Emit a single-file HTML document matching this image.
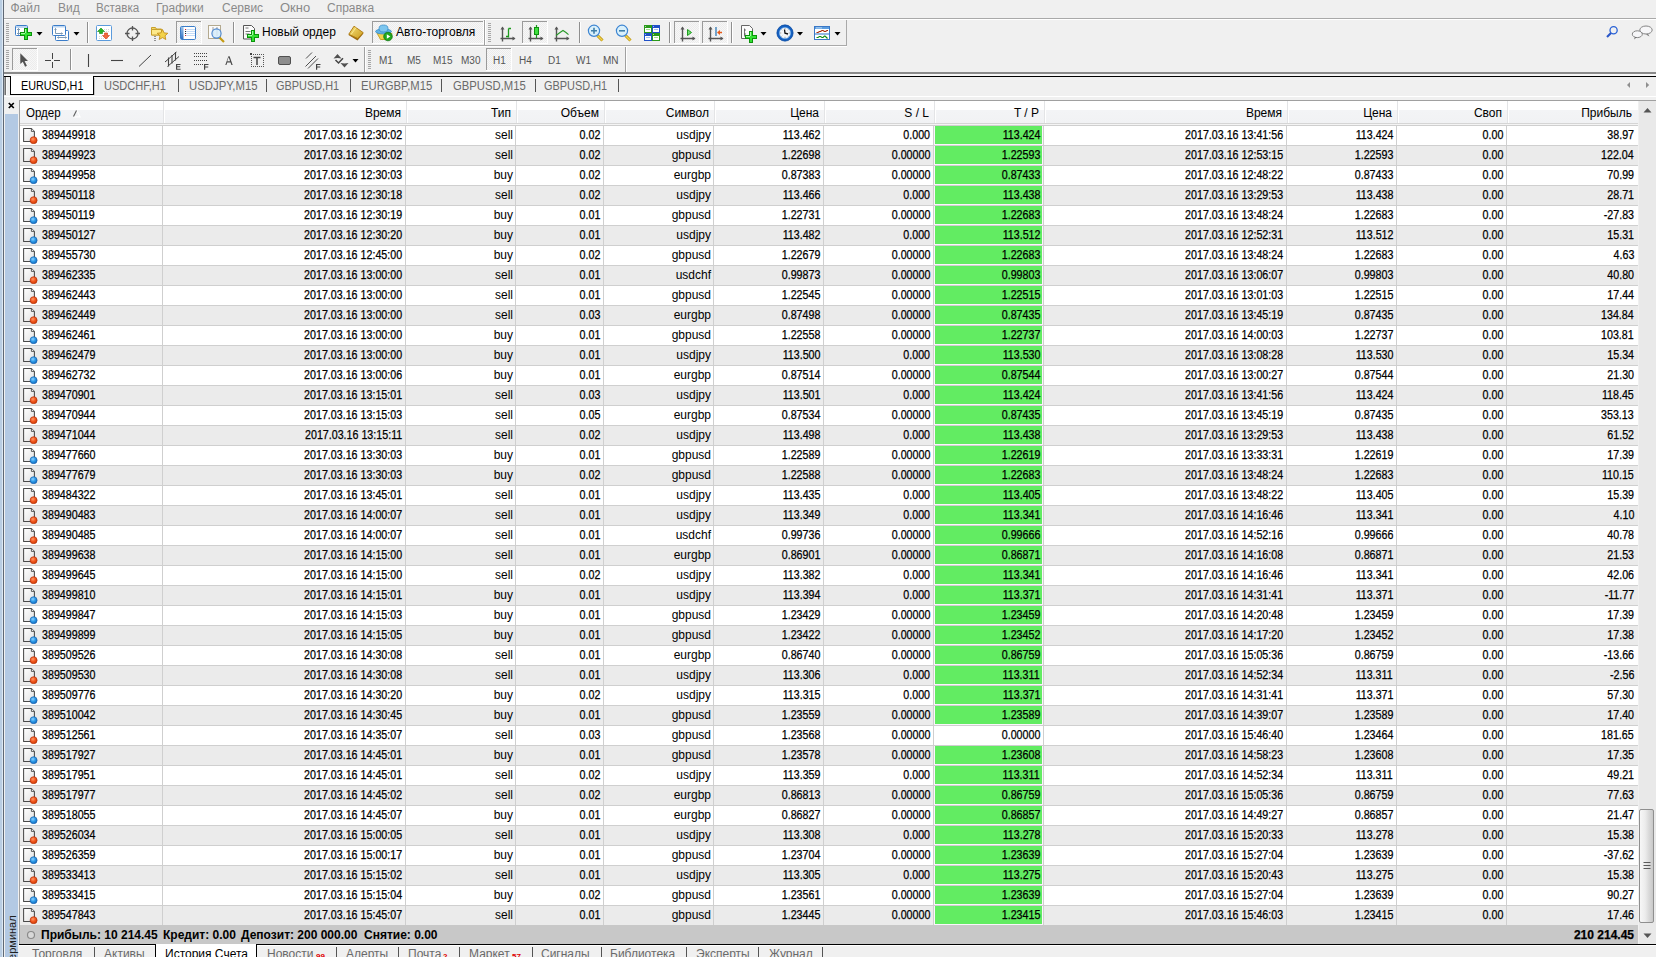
<!DOCTYPE html><html><head><meta charset="utf-8"><title>MT4</title><style>
*{box-sizing:border-box}
html,body{margin:0;padding:0}
body{width:1656px;height:957px;overflow:hidden;position:relative;background:#f0f0f0;font-family:"Liberation Sans",sans-serif;font-size:12px;color:#000}
.a{position:absolute}
.t{position:absolute;white-space:nowrap;line-height:14px}
.r{transform-origin:100% 50%}
.l{transform-origin:0 50%}
.menu{color:#8a8a8a;font-size:12px}
.cell{position:absolute;white-space:nowrap;line-height:14px;text-align:right;-webkit-text-stroke:0.25px #000}
</style></head><body>
<div class="a" style="left:0;top:0;width:2px;height:957px;background:#b9cde2"></div>
<div class="a" style="left:2px;top:0;width:1px;height:957px;background:#dce8f4"></div>
<div class="a" style="left:3px;top:0;width:1px;height:957px;background:#5f6874"></div>
<svg class="a" style="left:0;top:0" width="1656" height="96"><defs><pattern id="dots" width="2" height="2" patternUnits="userSpaceOnUse"><rect width="2" height="2" fill="#f7f7f7"/><rect width="1" height="1" fill="#ececec"/><rect x="1" y="1" width="1" height="1" fill="#ececec"/></pattern><linearGradient id="gold" x1="0" y1="0" x2="1" y2="1"><stop offset="0" stop-color="#f7e27a"/><stop offset="1" stop-color="#c99a1c"/></linearGradient><linearGradient id="bluebar" x1="0" y1="0" x2="0" y2="1"><stop offset="0" stop-color="#9cc3ea"/><stop offset="1" stop-color="#2f6fc0"/></linearGradient></defs><rect x="6" y="23" width="3" height="1" fill="#a6a6a6"/><rect x="6" y="25" width="3" height="1" fill="#a6a6a6"/><rect x="6" y="27" width="3" height="1" fill="#a6a6a6"/><rect x="6" y="29" width="3" height="1" fill="#a6a6a6"/><rect x="6" y="31" width="3" height="1" fill="#a6a6a6"/><rect x="6" y="33" width="3" height="1" fill="#a6a6a6"/><rect x="6" y="35" width="3" height="1" fill="#a6a6a6"/><rect x="6" y="37" width="3" height="1" fill="#a6a6a6"/><rect x="6" y="39" width="3" height="1" fill="#a6a6a6"/><rect x="6" y="41" width="3" height="1" fill="#a6a6a6"/><rect x="15.5" y="25.5" width="12" height="10" rx="1" fill="#fff" stroke="#3b7dc9"/><rect x="16" y="26" width="11" height="2" fill="#bcd6f2"/><path d="M18.5 28.5v6M17 30l1.5-1.5 1.5 1.5M17 33l1.5 1.5 1.5-1.5" stroke="#7d9ab5" fill="none"/><path d="M24 28h4v4h4v4h-4v4h-4v-4h-4v-4h4z" fill="#0b930b"/><path d="M25 29h2v4h4v2h-4v4h-2v-4h-4v-2h4z" fill="#33e133"/><path d="M25 29h1v4h-1z M21 33h4v1h-4z" fill="#a6f7a6"/><path d="M36.5 32h6l-3 3.5z" fill="#000"/><rect x="55.5" y="30.5" width="13" height="10" rx="1" fill="#fff" stroke="#3b7dc9"/><path d="M57.5 37.5h9M58.5 36.5l-1 1 1 1M65.5 36.5l1 1-1 1" stroke="#7d9ab5" fill="none"/><rect x="52.5" y="25.5" width="13" height="10" rx="1" fill="#fff" stroke="#3b7dc9"/><rect x="53" y="26" width="12" height="1.5" fill="#bcd6f2"/><path d="M55.5 28.5v5M54.5 29.5l1-1 1 1M55.5 33.5h7M61.5 32.5l1 1-1 1" stroke="#7d9ab5" fill="none"/><path d="M73.5 32h6l-3 3.5z" fill="#000"/><rect x="87" y="22" width="1" height="21" fill="#8f8f8f"/><rect x="88" y="22" width="1" height="21" fill="#fff"/><rect x="96.5" y="25.5" width="15" height="15" rx="1" fill="#fff" stroke="#5b9bdc"/><path d="M99 36.5h10M99 38.5h10M104 29.5h5M104 31.5h5" stroke="#d8d8d8" stroke-dasharray="1 1"/><path d="M101 28l-3.5 3.5h2v2h3v-2h2z" fill="#26b626" stroke="#118a11" stroke-width="0.6"/><path d="M106 39l3.5-3.5h-2v-2.5h-3v2.5h-2z" fill="#f06a3c" stroke="#d03a10" stroke-width="0.6"/><circle cx="132.5" cy="33.5" r="5.5" fill="none" stroke="#555" stroke-width="1.3"/><path d="M132.5 26v4.5M132.5 36.5V41M125 33.5h4.5M135.5 33.5H140" stroke="#555" stroke-width="1.3"/><path d="M151.5 27.5h4l1 1.5h5v6h-10z" fill="url(#gold)" stroke="#c8a02a"/><path d="M151.5 29.5h10v5.5h-10z" fill="#fde98a" stroke="#c8a02a"/><path d="M155 36v1M155 38v1M155 40v1" stroke="#333"/><path d="M162.5 29.5l1.6 3.4 3.7.4-2.8 2.5.8 3.7-3.3-1.9-3.3 1.9.8-3.7-2.8-2.5 3.7-.4z" fill="#f3d34a" stroke="#c4901a" stroke-width="0.9"/><rect x="176" y="21" width="25" height="22" fill="url(#dots)"/><rect x="176" y="21" width="25" height="1" fill="#9a9a9a"/><rect x="176" y="21" width="1" height="22" fill="#9a9a9a"/><rect x="201" y="21" width="1" height="23" fill="#fff"/><rect x="176" y="43" width="26" height="1" fill="#fff"/><rect x="180.5" y="26.5" width="15" height="13" rx="1.2" fill="#fff" stroke="#3b7dc9"/><rect x="181" y="27" width="2.5" height="12" fill="url(#bluebar)"/><path d="M185 29.5h10M185 31.5h10M185 33.5h10M185 35.5h10" stroke="#c6dcf6"/><path d="M185 29.5h1M185 35.5h1" stroke="#e02020"/><path d="M185 31.5h1M185 33.5h1" stroke="#222"/><rect x="208.5" y="25.5" width="12" height="13" fill="#fbfbfb" stroke="#b3a98f"/><path d="M213 27v9M217 27v9" stroke="#8a8a8a" stroke-width="0.8"/><path d="M219.5 37.5l4.5 4.5" stroke="#c49a12" stroke-width="2.2"/><circle cx="216.5" cy="33.5" r="4.6" fill="#d6ecfa" fill-opacity="0.85" stroke="#4a86cf" stroke-width="1.1"/><rect x="233" y="22" width="1" height="21" fill="#8f8f8f"/><rect x="234" y="22" width="1" height="21" fill="#fff"/><path d="M243.5 25.5h8l3 3v10.5h-11z" fill="#fbfbfb" stroke="#555"/><path d="M245.5 28h3M245.5 31.5h5M245.5 34h4" stroke="#777"/><path d="M251 30h4v4h4v4h-4v4h-4v-4h-4v-4h4z" fill="#0b930b"/><path d="M252 31h2v4h4v2h-4v4h-2v-4h-4v-2h4z" fill="#33e133"/><path d="M252 31h1v4h-1z M248 35h4v1h-4z" fill="#a6f7a6"/><path d="M348.5 35L354 26.5L363.5 33.5L357.5 40.5Z" fill="#9a6a10"/><path d="M348.8 34.2L354 26.2L363.2 32.6L357.8 38.6Z" fill="url(#gold)" stroke="#b07a12" stroke-width="0.9"/><path d="M351 34.5l5-7" stroke="#fff2a0" stroke-width="1" opacity="0.8"/><rect x="372" y="21" width="111" height="22" fill="url(#dots)"/><rect x="372" y="21" width="111" height="1" fill="#9a9a9a"/><rect x="372" y="21" width="1" height="22" fill="#9a9a9a"/><rect x="483" y="21" width="1" height="23" fill="#fff"/><rect x="372" y="43" width="112" height="1" fill="#fff"/><path d="M377 33l3.5 6.5h9l2.5-6z" fill="#f2d34c" stroke="#c8a22a"/><ellipse cx="383.5" cy="31.5" rx="8" ry="2.5" fill="#5fb2e6" stroke="#3a8ec9" stroke-width="0.8"/><ellipse cx="383.5" cy="28.5" rx="4.5" ry="3.5" fill="#7cc6ef" stroke="#3a8ec9" stroke-width="0.8"/><circle cx="388" cy="36.5" r="4.3" fill="#1fa81f" stroke="#117511" stroke-width="0.8"/><path d="M386.8 34.2v4.6l3.5-2.3z" fill="#fff"/><rect x="484" y="20" width="1" height="25" fill="#a0a0a0"/><rect x="485" y="20" width="1" height="25" fill="#fff"/><rect x="488" y="23" width="3" height="1" fill="#a6a6a6"/><rect x="488" y="25" width="3" height="1" fill="#a6a6a6"/><rect x="488" y="27" width="3" height="1" fill="#a6a6a6"/><rect x="488" y="29" width="3" height="1" fill="#a6a6a6"/><rect x="488" y="31" width="3" height="1" fill="#a6a6a6"/><rect x="488" y="33" width="3" height="1" fill="#a6a6a6"/><rect x="488" y="35" width="3" height="1" fill="#a6a6a6"/><rect x="488" y="37" width="3" height="1" fill="#a6a6a6"/><rect x="488" y="39" width="3" height="1" fill="#a6a6a6"/><rect x="488" y="41" width="3" height="1" fill="#a6a6a6"/><path d="M502.5 41.5V27.5M500.5 38.5H514.5" stroke="#555" stroke-width="1.4" fill="none"/><path d="M500.5 29.5l2-3 2 3z M512.5 36.5l3 2-3 2z" fill="#555"/><path d="M508.5 28.5v9M508.5 28.5h2.5M506 36.5h2.5" stroke="#1e9a1e" stroke-width="1.3" fill="none"/><rect x="522" y="21" width="25" height="22" fill="url(#dots)"/><rect x="522" y="21" width="25" height="1" fill="#9a9a9a"/><rect x="522" y="21" width="1" height="22" fill="#9a9a9a"/><rect x="547" y="21" width="1" height="23" fill="#fff"/><rect x="522" y="43" width="26" height="1" fill="#fff"/><path d="M530.5 41.5V27.5M528.5 38.5H542.5" stroke="#555" stroke-width="1.4" fill="none"/><path d="M528.5 29.5l2-3 2 3z M540.5 36.5l3 2-3 2z" fill="#555"/><path d="M536.5 25v13" stroke="#1e9a1e" stroke-width="1.2"/><rect x="534.5" y="27.5" width="4" height="7" fill="#3fe03f" stroke="#119011"/><path d="M556.5 41.5V27.5M554.5 38.5H568.5" stroke="#555" stroke-width="1.4" fill="none"/><path d="M554.5 29.5l2-3 2 3z M566.5 36.5l3 2-3 2z" fill="#555"/><path d="M556 35.5l4-3 3-2 3 2 2.5 2.2" stroke="#2a9a2a" stroke-width="1.1" fill="none"/><rect x="579" y="22" width="1" height="21" fill="#8f8f8f"/><rect x="580" y="22" width="1" height="21" fill="#fff"/><path d="M597.5 35.5l5 5" stroke="#b8900a" stroke-width="3"/><path d="M597.5 35.5l5 5" stroke="#f2d24a" stroke-width="1.5"/><circle cx="594" cy="30.8" r="5.6" fill="#d9f0fb" stroke="#3d85d2" stroke-width="1.2"/><path d="M591 30.8h6M594 27.8v6" stroke="#3f7fa8" stroke-width="1.6"/><path d="M625.5 35.5l5 5" stroke="#b8900a" stroke-width="3"/><path d="M625.5 35.5l5 5" stroke="#f2d24a" stroke-width="1.5"/><circle cx="622" cy="30.8" r="5.6" fill="#d9f0fb" stroke="#3d85d2" stroke-width="1.2"/><path d="M619 30.8h6" stroke="#3f7fa8" stroke-width="1.6"/><rect x="644" y="25" width="8" height="8" fill="#2a9a1a"/><rect x="645" y="28" width="6" height="4" fill="#fff"/><rect x="646" y="29" width="4" height="1" fill="#9ee08e"/><rect x="645" y="26" width="1" height="1" fill="#fff" opacity="0.6"/><rect x="652" y="25" width="8" height="8" fill="#2050c8"/><rect x="653" y="28" width="6" height="4" fill="#fff"/><rect x="654" y="29" width="4" height="1" fill="#a8c0f0"/><rect x="653" y="26" width="1" height="1" fill="#fff" opacity="0.6"/><rect x="644" y="33" width="8" height="8" fill="#2050c8"/><rect x="645" y="36" width="6" height="4" fill="#fff"/><rect x="646" y="37" width="4" height="1" fill="#a8c0f0"/><rect x="645" y="34" width="1" height="1" fill="#fff" opacity="0.6"/><rect x="652" y="33" width="8" height="8" fill="#2a9a1a"/><rect x="653" y="36" width="6" height="4" fill="#fff"/><rect x="654" y="37" width="4" height="1" fill="#9ee08e"/><rect x="653" y="34" width="1" height="1" fill="#fff" opacity="0.6"/><rect x="669" y="22" width="1" height="21" fill="#8f8f8f"/><rect x="670" y="22" width="1" height="21" fill="#fff"/><rect x="674" y="21" width="25" height="22" fill="url(#dots)"/><rect x="674" y="21" width="25" height="1" fill="#9a9a9a"/><rect x="674" y="21" width="1" height="22" fill="#9a9a9a"/><rect x="699" y="21" width="1" height="23" fill="#fff"/><rect x="674" y="43" width="26" height="1" fill="#fff"/><path d="M682.5 41.5V27.5M680.5 38.5H694.5" stroke="#555" stroke-width="1.4" fill="none"/><path d="M680.5 29.5l2-3 2 3z M692.5 36.5l3 2-3 2z" fill="#555"/><path d="M687.5 29.5v6l4-3z" fill="#6fe06f" stroke="#1e9a1e"/><rect x="702" y="21" width="25" height="22" fill="url(#dots)"/><rect x="702" y="21" width="25" height="1" fill="#9a9a9a"/><rect x="702" y="21" width="1" height="22" fill="#9a9a9a"/><rect x="727" y="21" width="1" height="23" fill="#fff"/><rect x="702" y="43" width="26" height="1" fill="#fff"/><path d="M710.5 41.5V27.5M708.5 38.5H722.5" stroke="#555" stroke-width="1.4" fill="none"/><path d="M708.5 29.5l2-3 2 3z M720.5 36.5l3 2-3 2z" fill="#555"/><path d="M716 27v9" stroke="#1f6fb0" stroke-width="1.2"/><path d="M717 32.5l3-2.5v1.8h2v1.4h-2v1.8z" fill="#e85a18"/><rect x="731" y="22" width="1" height="21" fill="#8f8f8f"/><rect x="732" y="22" width="1" height="21" fill="#fff"/><path d="M741.5 25.5h8l3 3v10h-11z" fill="#fbfbfb" stroke="#666"/><path d="M744.5 28.5v8M744 30h2M744 34h2" stroke="#555" stroke-width="0.8"/><path d="M749 31h4v4h4v4h-4v4h-4v-4h-4v-4h4z" fill="#0b930b"/><path d="M750 32h2v4h4v2h-4v4h-2v-4h-4v-2h4z" fill="#33e133"/><path d="M750 32h1v4h-1z M746 36h4v1h-4z" fill="#a6f7a6"/><path d="M760.5 32h6l-3 3.5z" fill="#000"/><circle cx="785" cy="33" r="6.9" fill="#f4f6f8" stroke="#1560c0" stroke-width="2.6"/><circle cx="785" cy="33" r="8.1" fill="none" stroke="#0a4aa0" stroke-width="0.7"/><circle cx="785" cy="33" r="5.6" fill="none" stroke="#6fb0f0" stroke-width="0.6"/><path d="M785 28.2v1M789.8 33h-1M785 37.8v-1M780.2 33h1M788.4 29.6l-.6.6M781.6 29.6l.6.6M788.4 36.4l-.6-.6M781.6 36.4l.6-.6" stroke="#777" stroke-width="0.8"/><path d="M784.5 29.5L785 33.2L788 34" stroke="#111" stroke-width="1.3" fill="none"/><path d="M797 32h6l-3 3.5z" fill="#000"/><rect x="814.5" y="26.5" width="15" height="13" fill="#fff" stroke="#3a78c6"/><rect x="815" y="27" width="14" height="2" fill="#5d9ee0"/><rect x="816" y="27.5" width="6" height="0.8" fill="#cfe3f7"/><path d="M815 34h14" stroke="#4a88d0" stroke-width="1.2"/><path d="M816.5 32.5h1.5l1.5-1h1l1.5-1h1l1.5 1h1l1.5-1h1" stroke="#a82a08" stroke-width="1.1" fill="none"/><path d="M816.5 37.5h1.5l1.5-1h1l1.5 1h1l1.5-1.5h.5l1.5 1.5 1 1" stroke="#0e8a0e" stroke-width="1.1" fill="none"/><path d="M834.5 32h6l-3 3.5z" fill="#000"/><circle cx="1613.6" cy="30.2" r="3.6" fill="none" stroke="#2a62d6" stroke-width="1.3"/><path d="M1611 33l-4 4" stroke="#2a56c8" stroke-width="2.2"/><ellipse cx="1646" cy="30" rx="6.2" ry="4" fill="#f6f6f8" stroke="#777" stroke-width="0.9"/><path d="M1648 34l1.5 2.5-3.5-2" fill="#777"/><ellipse cx="1637.3" cy="34.2" rx="5" ry="3.4" fill="#f6f6f8" stroke="#777" stroke-width="0.9"/><path d="M1635 37l-1 2.5 2.5-2" fill="#666"/><rect x="6" y="50" width="3" height="1" fill="#a6a6a6"/><rect x="6" y="52" width="3" height="1" fill="#a6a6a6"/><rect x="6" y="54" width="3" height="1" fill="#a6a6a6"/><rect x="6" y="56" width="3" height="1" fill="#a6a6a6"/><rect x="6" y="58" width="3" height="1" fill="#a6a6a6"/><rect x="6" y="60" width="3" height="1" fill="#a6a6a6"/><rect x="6" y="62" width="3" height="1" fill="#a6a6a6"/><rect x="6" y="64" width="3" height="1" fill="#a6a6a6"/><rect x="6" y="66" width="3" height="1" fill="#a6a6a6"/><rect x="6" y="68" width="3" height="1" fill="#a6a6a6"/><rect x="12" y="48" width="25" height="22" fill="url(#dots)"/><rect x="12" y="48" width="25" height="1" fill="#9a9a9a"/><rect x="12" y="48" width="1" height="22" fill="#9a9a9a"/><rect x="37" y="48" width="1" height="23" fill="#fff"/><rect x="12" y="70" width="26" height="1" fill="#fff"/><path d="M20.3 53.2v10.8l2.5-2.3 2.3 5 1.8-.9-2.3-4.7h3.4z" fill="#505050"/><path d="M52.5 53v6M52.5 62v6M45 60.5h6M54 60.5h6" stroke="#444" stroke-width="1"/><rect x="70" y="49" width="1" height="21" fill="#8f8f8f"/><rect x="71" y="49" width="1" height="21" fill="#fff"/><path d="M88.5 54v13" stroke="#444" stroke-width="1.1"/><path d="M111 60.5h12" stroke="#444" stroke-width="1.1"/><path d="M139 66.5l12-11.5" stroke="#444" stroke-width="1"/><path d="M165 62l11.5-10M167.5 66.5l11.5-10" stroke="#444" stroke-width="1" fill="none"/><path d="M168.5 57.5v9M172 55v8.5M175.5 52v8.5" stroke="#444" stroke-width="1.1" fill="none"/><path d="M176 64h4.5v1h-3.3v1.3h3v1h-3v1.4h3.4v1h-4.6z" fill="#444"/><path d="M194 53.5h13" stroke="#444" stroke-dasharray="1 1"/><path d="M194 56.5h13" stroke="#444" stroke-dasharray="1 1"/><path d="M194 60.5h13" stroke="#444" stroke-dasharray="1 1"/><path d="M194 64.5h9" stroke="#444" stroke-dasharray="1 1"/><path d="M204 64h4.5v1h-3.3v1.5h3v1h-3v2.2h-1.2z" fill="#444"/><path d="M225.3 65L228.4 56.2h1.2L232.7 65h-1.3l-.9-2.6h-3.2l-.9 2.6zM227.2 61.3h2.9l-1.45-4.1z" fill="#4a4a4a" fill-rule="evenodd"/><rect x="251" y="54" width="1" height="1" fill="#555"/><rect x="251" y="66" width="1" height="1" fill="#555"/><rect x="253" y="54" width="1" height="1" fill="#555"/><rect x="253" y="66" width="1" height="1" fill="#555"/><rect x="255" y="54" width="1" height="1" fill="#555"/><rect x="255" y="66" width="1" height="1" fill="#555"/><rect x="257" y="54" width="1" height="1" fill="#555"/><rect x="257" y="66" width="1" height="1" fill="#555"/><rect x="259" y="54" width="1" height="1" fill="#555"/><rect x="259" y="66" width="1" height="1" fill="#555"/><rect x="261" y="54" width="1" height="1" fill="#555"/><rect x="261" y="66" width="1" height="1" fill="#555"/><rect x="263" y="54" width="1" height="1" fill="#555"/><rect x="263" y="66" width="1" height="1" fill="#555"/><rect x="251" y="56" width="1" height="1" fill="#555"/><rect x="263" y="56" width="1" height="1" fill="#555"/><rect x="251" y="58" width="1" height="1" fill="#555"/><rect x="263" y="58" width="1" height="1" fill="#555"/><rect x="251" y="60" width="1" height="1" fill="#555"/><rect x="263" y="60" width="1" height="1" fill="#555"/><rect x="251" y="62" width="1" height="1" fill="#555"/><rect x="263" y="62" width="1" height="1" fill="#555"/><rect x="251" y="64" width="1" height="1" fill="#555"/><rect x="263" y="64" width="1" height="1" fill="#555"/><rect x="250" y="53" width="2" height="2" fill="#444"/><path d="M253.5 57.5h7M257 57.5v7.5" stroke="#444" stroke-width="1.5"/><rect x="278.5" y="56.5" width="12" height="8" rx="1.5" fill="#8d8d8d" stroke="#505050"/><path d="M306 58.5l6-6M305.5 66.5l10.5-10.5M308 68.5l10-10" stroke="#505050" stroke-width="1"/><path d="M316 64h4.5v1h-3.3v1.5h3v1h-3v2.2h-1.2z" fill="#444"/><path d="M333.5 58.5L337.5 54L341.5 58.5L337.5 58Z M340.5 63L344.5 67.5L348.5 63L344.5 63.5Z" fill="#505050"/><path d="M335.5 60l3 3 4.5-4.8" stroke="#444" stroke-width="1.5" fill="none"/><path d="M352.5 59h6l-3 3.5z" fill="#000"/><rect x="364" y="47" width="1" height="25" fill="#a0a0a0"/><rect x="365" y="47" width="1" height="25" fill="#fff"/><rect x="368" y="50" width="3" height="1" fill="#a6a6a6"/><rect x="368" y="52" width="3" height="1" fill="#a6a6a6"/><rect x="368" y="54" width="3" height="1" fill="#a6a6a6"/><rect x="368" y="56" width="3" height="1" fill="#a6a6a6"/><rect x="368" y="58" width="3" height="1" fill="#a6a6a6"/><rect x="368" y="60" width="3" height="1" fill="#a6a6a6"/><rect x="368" y="62" width="3" height="1" fill="#a6a6a6"/><rect x="368" y="64" width="3" height="1" fill="#a6a6a6"/><rect x="368" y="66" width="3" height="1" fill="#a6a6a6"/><rect x="368" y="68" width="3" height="1" fill="#a6a6a6"/><rect x="486" y="48" width="25" height="22" fill="url(#dots)"/><rect x="486" y="48" width="25" height="1" fill="#9a9a9a"/><rect x="486" y="48" width="1" height="22" fill="#9a9a9a"/><rect x="511" y="48" width="1" height="23" fill="#fff"/><rect x="486" y="70" width="26" height="1" fill="#fff"/><rect x="625" y="47" width="1" height="25" fill="#a0a0a0"/><rect x="626" y="47" width="1" height="25" fill="#fff"/><path d="M1630 82v6l-3-3z" fill="#8f8f8f"/><path d="M1646 82v6l3.2-3z" fill="#8f8f8f"/></svg>
<div class="t menu l" style="left:10.5px;top:1px;transform:scaleX(1)">Файл</div>
<div class="t menu l" style="left:58px;top:1px;transform:scaleX(1)">Вид</div>
<div class="t menu l" style="left:96px;top:1px;transform:scaleX(0.97)">Вставка</div>
<div class="t menu l" style="left:156px;top:1px;transform:scaleX(1.0)">Графики</div>
<div class="t menu l" style="left:222px;top:1px;transform:scaleX(1.0)">Сервис</div>
<div class="t menu l" style="left:280px;top:1px;transform:scaleX(1.08)">Окно</div>
<div class="t menu l" style="left:327px;top:1px;transform:scaleX(1.0)">Справка</div>
<div class="a" style="left:4px;top:18px;width:1652px;height:1px;background:#a9a9a9"></div>
<div class="a" style="left:4px;top:19px;width:1652px;height:1px;background:#fff"></div>
<div class="a" style="left:4px;top:45px;width:843px;height:1px;background:#a9a9a9"></div>
<div class="a" style="left:4px;top:46px;width:843px;height:1px;background:#fff"></div>
<div class="a" style="left:846px;top:20px;width:1px;height:26px;background:#a9a9a9"></div>
<div class="a" style="left:4px;top:72px;width:1652px;height:2px;background:#8a8a8a"></div>
<div class="a" style="left:4px;top:74px;width:1652px;height:2px;background:#f7f7f7"></div>
<div class="t l" style="left:379px;top:54px;font-size:10px;color:#555;transform:scaleX(1)">M1</div>
<div class="t l" style="left:407px;top:54px;font-size:10px;color:#555;transform:scaleX(1)">M5</div>
<div class="t l" style="left:433px;top:54px;font-size:10px;color:#555;transform:scaleX(1)">M15</div>
<div class="t l" style="left:461px;top:54px;font-size:10px;color:#555;transform:scaleX(1)">M30</div>
<div class="t l" style="left:493px;top:54px;font-size:10px;color:#555;transform:scaleX(1)">H1</div>
<div class="t l" style="left:519px;top:54px;font-size:10px;color:#555;transform:scaleX(1)">H4</div>
<div class="t l" style="left:548px;top:54px;font-size:10px;color:#555;transform:scaleX(1)">D1</div>
<div class="t l" style="left:576px;top:54px;font-size:10px;color:#555;transform:scaleX(1)">W1</div>
<div class="t l" style="left:603px;top:54px;font-size:10px;color:#555;transform:scaleX(1)">MN</div>
<div class="t l" style="left:262px;top:25px;transform:scaleX(1.0)">Новый ордер</div>
<div class="t l" style="left:396px;top:25px">Авто-торговля</div>
<div class="a" style="left:4px;top:76px;width:1652px;height:1px;background:#000"></div>
<div class="a" style="left:4px;top:77px;width:1px;height:18px;background:#a6a6a6"></div>
<div class="a" style="left:5px;top:77px;width:1px;height:18px;background:#707070"></div>
<div class="a" style="left:6px;top:77px;width:1px;height:18px;background:#fafafa"></div>
<div class="a" style="left:10px;top:76px;width:84px;height:19px;background:#fff;border:1px solid #000;border-top:none"></div>
<div class="a" style="left:94px;top:78px;width:1px;height:17px;background:#c4c4c4"></div>
<div class="t l" style="left:20.5px;top:79px;transform:scaleX(0.90)">EURUSD,H1</div>
<div class="t l" style="left:103.5px;top:79px;color:#6a6a6a;transform:scaleX(0.92)">USDCHF,H1</div>
<div class="a" style="left:178px;top:79px;width:1px;height:13px;background:#555"></div>
<div class="t l" style="left:188.5px;top:79px;color:#6a6a6a;transform:scaleX(0.946)">USDJPY,M15</div>
<div class="a" style="left:266px;top:79px;width:1px;height:13px;background:#555"></div>
<div class="t l" style="left:276px;top:79px;color:#6a6a6a;transform:scaleX(0.91)">GBPUSD,H1</div>
<div class="a" style="left:350px;top:79px;width:1px;height:13px;background:#555"></div>
<div class="t l" style="left:360.5px;top:79px;color:#6a6a6a;transform:scaleX(0.94)">EURGBP,M15</div>
<div class="a" style="left:441px;top:79px;width:1px;height:13px;background:#555"></div>
<div class="t l" style="left:452.5px;top:79px;color:#6a6a6a;transform:scaleX(0.94)">GBPUSD,M15</div>
<div class="a" style="left:535px;top:79px;width:1px;height:13px;background:#555"></div>
<div class="t l" style="left:544px;top:79px;color:#6a6a6a;transform:scaleX(0.91)">GBPUSD,H1</div>
<div class="a" style="left:618px;top:79px;width:1px;height:13px;background:#555"></div>
<div class="a" style="left:4px;top:96px;width:1652px;height:1px;background:#fff"></div>
<div class="a" style="left:5px;top:114px;width:13px;height:843px;background:#b3c9e3"></div>
<svg class="a" style="left:7px;top:101px" width="9" height="9"><path d="M1.8 2L6.8 7M6.8 2L1.8 7" stroke="#000" stroke-width="1.7"/></svg>
<div class="t" style="left:5px;top:966px;transform-origin:0 0;transform:rotate(-90deg);font-size:11px;color:#202020">Терминал</div>
<div class="a" style="left:19px;top:100px;width:1637px;height:1px;background:#a0a0a0"></div>
<div class="a" style="left:19px;top:100px;width:1px;height:844px;background:#a0a0a0"></div>
<div class="a" style="left:20px;top:101px;width:1618px;height:22px;background:linear-gradient(#ffffff 0,#ffffff 9px,#f3f4f6 9px,#f1f2f4 22px)"></div>
<div class="a" style="left:20px;top:123px;width:1618px;height:1px;background:#d5d5d5"></div>
<div class="a" style="left:20px;top:124px;width:1618px;height:1px;background:#f4f4f4"></div>
<div class="a" style="left:163px;top:101px;width:1px;height:22px;background:#e3e4e6"></div>
<div class="a" style="left:164px;top:101px;width:1px;height:22px;background:#fff"></div>
<div class="a" style="left:406px;top:101px;width:1px;height:22px;background:#e3e4e6"></div>
<div class="a" style="left:407px;top:101px;width:1px;height:22px;background:#fff"></div>
<div class="a" style="left:516px;top:101px;width:1px;height:22px;background:#e3e4e6"></div>
<div class="a" style="left:517px;top:101px;width:1px;height:22px;background:#fff"></div>
<div class="a" style="left:604px;top:101px;width:1px;height:22px;background:#e3e4e6"></div>
<div class="a" style="left:605px;top:101px;width:1px;height:22px;background:#fff"></div>
<div class="a" style="left:714px;top:101px;width:1px;height:22px;background:#e3e4e6"></div>
<div class="a" style="left:715px;top:101px;width:1px;height:22px;background:#fff"></div>
<div class="a" style="left:824px;top:101px;width:1px;height:22px;background:#e3e4e6"></div>
<div class="a" style="left:825px;top:101px;width:1px;height:22px;background:#fff"></div>
<div class="a" style="left:934px;top:101px;width:1px;height:22px;background:#e3e4e6"></div>
<div class="a" style="left:935px;top:101px;width:1px;height:22px;background:#fff"></div>
<div class="a" style="left:1044px;top:101px;width:1px;height:22px;background:#e3e4e6"></div>
<div class="a" style="left:1045px;top:101px;width:1px;height:22px;background:#fff"></div>
<div class="a" style="left:1287px;top:101px;width:1px;height:22px;background:#e3e4e6"></div>
<div class="a" style="left:1288px;top:101px;width:1px;height:22px;background:#fff"></div>
<div class="a" style="left:1397px;top:101px;width:1px;height:22px;background:#e3e4e6"></div>
<div class="a" style="left:1398px;top:101px;width:1px;height:22px;background:#fff"></div>
<div class="a" style="left:1507px;top:101px;width:1px;height:22px;background:#e3e4e6"></div>
<div class="a" style="left:1508px;top:101px;width:1px;height:22px;background:#fff"></div>
<div class="t l" style="left:26px;top:106px;transform:scaleX(0.96)">Ордер</div>
<svg class="a" style="left:70px;top:108px" width="12" height="12"><path d="M7 2.5L10 8.8H3.6" fill="none" stroke="#fff" stroke-width="1.2"/><path d="M3.5 8.5L6.5 2.5" stroke="#606060" stroke-width="1.1"/></svg>
<div class="cell" style="right:1255px;top:106px;-webkit-text-stroke:0">Время</div>
<div class="cell" style="right:1145px;top:106px;-webkit-text-stroke:0">Тип</div>
<div class="cell" style="right:1057px;top:106px;-webkit-text-stroke:0">Объем</div>
<div class="cell" style="right:947px;top:106px;-webkit-text-stroke:0">Символ</div>
<div class="cell" style="right:837px;top:106px;-webkit-text-stroke:0">Цена</div>
<div class="cell" style="right:727px;top:106px;-webkit-text-stroke:0">S / L</div>
<div class="cell" style="right:617px;top:106px;-webkit-text-stroke:0">T / P</div>
<div class="cell" style="right:374px;top:106px;-webkit-text-stroke:0">Время</div>
<div class="cell" style="right:264px;top:106px;-webkit-text-stroke:0">Цена</div>
<div class="cell" style="right:154px;top:106px;-webkit-text-stroke:0">Своп</div>
<div class="cell" style="right:24px;top:106px;-webkit-text-stroke:0">Прибыль</div>
<svg width="0" height="0" style="position:absolute"><defs><linearGradient id="gdoc" x1="0" y1="0" x2="1" y2="1"><stop offset="0" stop-color="#ffffff"/><stop offset="1" stop-color="#e2e2e2"/></linearGradient><radialGradient id="gs" cx="0.4" cy="0.35" r="0.7"><stop offset="0" stop-color="#ff9a6a"/><stop offset="0.5" stop-color="#f2561c"/><stop offset="1" stop-color="#c83a08"/></radialGradient><radialGradient id="gb" cx="0.4" cy="0.35" r="0.7"><stop offset="0" stop-color="#8fd0ff"/><stop offset="0.5" stop-color="#2a9ae8"/><stop offset="1" stop-color="#1766b8"/></radialGradient></defs></svg>
<div class="a" style="left:20px;top:125px;width:1618px;height:20px;background:#ffffff;border-top:1px solid #cfcfcf"></div>
<div class="a" style="left:20px;top:145px;width:1618px;height:20px;background:#ebebeb;border-top:1px solid #cfcfcf"></div>
<div class="a" style="left:20px;top:165px;width:1618px;height:20px;background:#ffffff;border-top:1px solid #cfcfcf"></div>
<div class="a" style="left:20px;top:185px;width:1618px;height:20px;background:#ebebeb;border-top:1px solid #cfcfcf"></div>
<div class="a" style="left:20px;top:205px;width:1618px;height:20px;background:#ffffff;border-top:1px solid #cfcfcf"></div>
<div class="a" style="left:20px;top:225px;width:1618px;height:20px;background:#ebebeb;border-top:1px solid #cfcfcf"></div>
<div class="a" style="left:20px;top:245px;width:1618px;height:20px;background:#ffffff;border-top:1px solid #cfcfcf"></div>
<div class="a" style="left:20px;top:265px;width:1618px;height:20px;background:#ebebeb;border-top:1px solid #cfcfcf"></div>
<div class="a" style="left:20px;top:285px;width:1618px;height:20px;background:#ffffff;border-top:1px solid #cfcfcf"></div>
<div class="a" style="left:20px;top:305px;width:1618px;height:20px;background:#ebebeb;border-top:1px solid #cfcfcf"></div>
<div class="a" style="left:20px;top:325px;width:1618px;height:20px;background:#ffffff;border-top:1px solid #cfcfcf"></div>
<div class="a" style="left:20px;top:345px;width:1618px;height:20px;background:#ebebeb;border-top:1px solid #cfcfcf"></div>
<div class="a" style="left:20px;top:365px;width:1618px;height:20px;background:#ffffff;border-top:1px solid #cfcfcf"></div>
<div class="a" style="left:20px;top:385px;width:1618px;height:20px;background:#ebebeb;border-top:1px solid #cfcfcf"></div>
<div class="a" style="left:20px;top:405px;width:1618px;height:20px;background:#ffffff;border-top:1px solid #cfcfcf"></div>
<div class="a" style="left:20px;top:425px;width:1618px;height:20px;background:#ebebeb;border-top:1px solid #cfcfcf"></div>
<div class="a" style="left:20px;top:445px;width:1618px;height:20px;background:#ffffff;border-top:1px solid #cfcfcf"></div>
<div class="a" style="left:20px;top:465px;width:1618px;height:20px;background:#ebebeb;border-top:1px solid #cfcfcf"></div>
<div class="a" style="left:20px;top:485px;width:1618px;height:20px;background:#ffffff;border-top:1px solid #cfcfcf"></div>
<div class="a" style="left:20px;top:505px;width:1618px;height:20px;background:#ebebeb;border-top:1px solid #cfcfcf"></div>
<div class="a" style="left:20px;top:525px;width:1618px;height:20px;background:#ffffff;border-top:1px solid #cfcfcf"></div>
<div class="a" style="left:20px;top:545px;width:1618px;height:20px;background:#ebebeb;border-top:1px solid #cfcfcf"></div>
<div class="a" style="left:20px;top:565px;width:1618px;height:20px;background:#ffffff;border-top:1px solid #cfcfcf"></div>
<div class="a" style="left:20px;top:585px;width:1618px;height:20px;background:#ebebeb;border-top:1px solid #cfcfcf"></div>
<div class="a" style="left:20px;top:605px;width:1618px;height:20px;background:#ffffff;border-top:1px solid #cfcfcf"></div>
<div class="a" style="left:20px;top:625px;width:1618px;height:20px;background:#ebebeb;border-top:1px solid #cfcfcf"></div>
<div class="a" style="left:20px;top:645px;width:1618px;height:20px;background:#ffffff;border-top:1px solid #cfcfcf"></div>
<div class="a" style="left:20px;top:665px;width:1618px;height:20px;background:#ebebeb;border-top:1px solid #cfcfcf"></div>
<div class="a" style="left:20px;top:685px;width:1618px;height:20px;background:#ffffff;border-top:1px solid #cfcfcf"></div>
<div class="a" style="left:20px;top:705px;width:1618px;height:20px;background:#ebebeb;border-top:1px solid #cfcfcf"></div>
<div class="a" style="left:20px;top:725px;width:1618px;height:20px;background:#ffffff;border-top:1px solid #cfcfcf"></div>
<div class="a" style="left:20px;top:745px;width:1618px;height:20px;background:#ebebeb;border-top:1px solid #cfcfcf"></div>
<div class="a" style="left:20px;top:765px;width:1618px;height:20px;background:#ffffff;border-top:1px solid #cfcfcf"></div>
<div class="a" style="left:20px;top:785px;width:1618px;height:20px;background:#ebebeb;border-top:1px solid #cfcfcf"></div>
<div class="a" style="left:20px;top:805px;width:1618px;height:20px;background:#ffffff;border-top:1px solid #cfcfcf"></div>
<div class="a" style="left:20px;top:825px;width:1618px;height:20px;background:#ebebeb;border-top:1px solid #cfcfcf"></div>
<div class="a" style="left:20px;top:845px;width:1618px;height:20px;background:#ffffff;border-top:1px solid #cfcfcf"></div>
<div class="a" style="left:20px;top:865px;width:1618px;height:20px;background:#ebebeb;border-top:1px solid #cfcfcf"></div>
<div class="a" style="left:20px;top:885px;width:1618px;height:20px;background:#ffffff;border-top:1px solid #cfcfcf"></div>
<div class="a" style="left:20px;top:905px;width:1618px;height:20px;background:#ebebeb;border-top:1px solid #cfcfcf"></div>
<div class="a" style="left:162px;top:125px;width:1px;height:800px;background:#cfcfcf"></div>
<div class="a" style="left:405px;top:125px;width:1px;height:800px;background:#cfcfcf"></div>
<div class="a" style="left:515px;top:125px;width:1px;height:800px;background:#cfcfcf"></div>
<div class="a" style="left:603px;top:125px;width:1px;height:800px;background:#cfcfcf"></div>
<div class="a" style="left:713px;top:125px;width:1px;height:800px;background:#cfcfcf"></div>
<div class="a" style="left:823px;top:125px;width:1px;height:800px;background:#cfcfcf"></div>
<div class="a" style="left:933px;top:125px;width:1px;height:800px;background:#cfcfcf"></div>
<div class="a" style="left:1043px;top:125px;width:1px;height:800px;background:#cfcfcf"></div>
<div class="a" style="left:1286px;top:125px;width:1px;height:800px;background:#cfcfcf"></div>
<div class="a" style="left:1396px;top:125px;width:1px;height:800px;background:#cfcfcf"></div>
<div class="a" style="left:1506px;top:125px;width:1px;height:800px;background:#cfcfcf"></div>
<div class="a" style="left:934px;top:126px;width:109px;height:19px;background:#fbf6fb"></div>
<div class="a" style="left:935px;top:126px;width:107px;height:18px;background:#62ec62"></div>
<svg class="a" style="left:22px;top:127px" width="17" height="17"><path d="M1.6 1.5H9.2L12.4 4.6V14.4H1.6Z" fill="url(#gdoc)" stroke="#4a4a4a" stroke-width="1.05" stroke-linejoin="round"/><path d="M9.4 1.8V4.4H12.2" fill="#fff" stroke="#4a4a4a" stroke-width="0.9"/><circle cx="11.6" cy="13.2" r="3.5" fill="url(#gs)" stroke="#b83208" stroke-width="0.7"/></svg>
<div class="t l" style="left:42px;top:128px;transform:scaleX(0.89);-webkit-text-stroke:0.25px #000">389449918</div>
<div class="cell r" style="right:1254px;top:128px;transform:scaleX(0.89)">2017.03.16 12:30:02</div>
<div class="cell r" style="right:1143px;top:128px;transform:scaleX(1.0);-webkit-text-stroke:0">sell</div>
<div class="cell r" style="right:1056px;top:128px;transform:scaleX(0.89)">0.02</div>
<div class="cell r" style="right:945px;top:128px;transform:scaleX(1.0);-webkit-text-stroke:0">usdjpy</div>
<div class="cell r" style="right:836px;top:128px;transform:scaleX(0.89)">113.462</div>
<div class="cell r" style="right:726px;top:128px;transform:scaleX(0.89)">0.000</div>
<div class="cell r" style="right:616px;top:128px;transform:scaleX(0.89)">113.424</div>
<div class="cell r" style="right:373px;top:128px;transform:scaleX(0.89)">2017.03.16 13:41:56</div>
<div class="cell r" style="right:263px;top:128px;transform:scaleX(0.89)">113.424</div>
<div class="cell r" style="right:153px;top:128px;transform:scaleX(0.89)">0.00</div>
<div class="cell r" style="right:22px;top:128px;transform:scaleX(0.89)">38.97</div>
<div class="a" style="left:934px;top:146px;width:109px;height:19px;background:#fbf6fb"></div>
<div class="a" style="left:935px;top:146px;width:107px;height:18px;background:#62ec62"></div>
<svg class="a" style="left:22px;top:147px" width="17" height="17"><path d="M1.6 1.5H9.2L12.4 4.6V14.4H1.6Z" fill="url(#gdoc)" stroke="#4a4a4a" stroke-width="1.05" stroke-linejoin="round"/><path d="M9.4 1.8V4.4H12.2" fill="#fff" stroke="#4a4a4a" stroke-width="0.9"/><circle cx="11.6" cy="13.2" r="3.5" fill="url(#gs)" stroke="#b83208" stroke-width="0.7"/></svg>
<div class="t l" style="left:42px;top:148px;transform:scaleX(0.89);-webkit-text-stroke:0.25px #000">389449923</div>
<div class="cell r" style="right:1254px;top:148px;transform:scaleX(0.89)">2017.03.16 12:30:02</div>
<div class="cell r" style="right:1143px;top:148px;transform:scaleX(1.0);-webkit-text-stroke:0">sell</div>
<div class="cell r" style="right:1056px;top:148px;transform:scaleX(0.89)">0.02</div>
<div class="cell r" style="right:945px;top:148px;transform:scaleX(1.0);-webkit-text-stroke:0">gbpusd</div>
<div class="cell r" style="right:836px;top:148px;transform:scaleX(0.89)">1.22698</div>
<div class="cell r" style="right:726px;top:148px;transform:scaleX(0.89)">0.00000</div>
<div class="cell r" style="right:616px;top:148px;transform:scaleX(0.89)">1.22593</div>
<div class="cell r" style="right:373px;top:148px;transform:scaleX(0.89)">2017.03.16 12:53:15</div>
<div class="cell r" style="right:263px;top:148px;transform:scaleX(0.89)">1.22593</div>
<div class="cell r" style="right:153px;top:148px;transform:scaleX(0.89)">0.00</div>
<div class="cell r" style="right:22px;top:148px;transform:scaleX(0.89)">122.04</div>
<div class="a" style="left:934px;top:166px;width:109px;height:19px;background:#fbf6fb"></div>
<div class="a" style="left:935px;top:166px;width:107px;height:18px;background:#62ec62"></div>
<svg class="a" style="left:22px;top:167px" width="17" height="17"><path d="M1.6 1.5H9.2L12.4 4.6V14.4H1.6Z" fill="url(#gdoc)" stroke="#4a4a4a" stroke-width="1.05" stroke-linejoin="round"/><path d="M9.4 1.8V4.4H12.2" fill="#fff" stroke="#4a4a4a" stroke-width="0.9"/><circle cx="11.6" cy="13.2" r="3.5" fill="url(#gb)" stroke="#1a64b0" stroke-width="0.7"/></svg>
<div class="t l" style="left:42px;top:168px;transform:scaleX(0.89);-webkit-text-stroke:0.25px #000">389449958</div>
<div class="cell r" style="right:1254px;top:168px;transform:scaleX(0.89)">2017.03.16 12:30:03</div>
<div class="cell r" style="right:1143px;top:168px;transform:scaleX(1.0);-webkit-text-stroke:0">buy</div>
<div class="cell r" style="right:1056px;top:168px;transform:scaleX(0.89)">0.02</div>
<div class="cell r" style="right:945px;top:168px;transform:scaleX(1.0);-webkit-text-stroke:0">eurgbp</div>
<div class="cell r" style="right:836px;top:168px;transform:scaleX(0.89)">0.87383</div>
<div class="cell r" style="right:726px;top:168px;transform:scaleX(0.89)">0.00000</div>
<div class="cell r" style="right:616px;top:168px;transform:scaleX(0.89)">0.87433</div>
<div class="cell r" style="right:373px;top:168px;transform:scaleX(0.89)">2017.03.16 12:48:22</div>
<div class="cell r" style="right:263px;top:168px;transform:scaleX(0.89)">0.87433</div>
<div class="cell r" style="right:153px;top:168px;transform:scaleX(0.89)">0.00</div>
<div class="cell r" style="right:22px;top:168px;transform:scaleX(0.89)">70.99</div>
<div class="a" style="left:934px;top:186px;width:109px;height:19px;background:#fbf6fb"></div>
<div class="a" style="left:935px;top:186px;width:107px;height:18px;background:#62ec62"></div>
<svg class="a" style="left:22px;top:187px" width="17" height="17"><path d="M1.6 1.5H9.2L12.4 4.6V14.4H1.6Z" fill="url(#gdoc)" stroke="#4a4a4a" stroke-width="1.05" stroke-linejoin="round"/><path d="M9.4 1.8V4.4H12.2" fill="#fff" stroke="#4a4a4a" stroke-width="0.9"/><circle cx="11.6" cy="13.2" r="3.5" fill="url(#gs)" stroke="#b83208" stroke-width="0.7"/></svg>
<div class="t l" style="left:42px;top:188px;transform:scaleX(0.89);-webkit-text-stroke:0.25px #000">389450118</div>
<div class="cell r" style="right:1254px;top:188px;transform:scaleX(0.89)">2017.03.16 12:30:18</div>
<div class="cell r" style="right:1143px;top:188px;transform:scaleX(1.0);-webkit-text-stroke:0">sell</div>
<div class="cell r" style="right:1056px;top:188px;transform:scaleX(0.89)">0.02</div>
<div class="cell r" style="right:945px;top:188px;transform:scaleX(1.0);-webkit-text-stroke:0">usdjpy</div>
<div class="cell r" style="right:836px;top:188px;transform:scaleX(0.89)">113.466</div>
<div class="cell r" style="right:726px;top:188px;transform:scaleX(0.89)">0.000</div>
<div class="cell r" style="right:616px;top:188px;transform:scaleX(0.89)">113.438</div>
<div class="cell r" style="right:373px;top:188px;transform:scaleX(0.89)">2017.03.16 13:29:53</div>
<div class="cell r" style="right:263px;top:188px;transform:scaleX(0.89)">113.438</div>
<div class="cell r" style="right:153px;top:188px;transform:scaleX(0.89)">0.00</div>
<div class="cell r" style="right:22px;top:188px;transform:scaleX(0.89)">28.71</div>
<div class="a" style="left:934px;top:206px;width:109px;height:19px;background:#fbf6fb"></div>
<div class="a" style="left:935px;top:206px;width:107px;height:18px;background:#62ec62"></div>
<svg class="a" style="left:22px;top:207px" width="17" height="17"><path d="M1.6 1.5H9.2L12.4 4.6V14.4H1.6Z" fill="url(#gdoc)" stroke="#4a4a4a" stroke-width="1.05" stroke-linejoin="round"/><path d="M9.4 1.8V4.4H12.2" fill="#fff" stroke="#4a4a4a" stroke-width="0.9"/><circle cx="11.6" cy="13.2" r="3.5" fill="url(#gb)" stroke="#1a64b0" stroke-width="0.7"/></svg>
<div class="t l" style="left:42px;top:208px;transform:scaleX(0.89);-webkit-text-stroke:0.25px #000">389450119</div>
<div class="cell r" style="right:1254px;top:208px;transform:scaleX(0.89)">2017.03.16 12:30:19</div>
<div class="cell r" style="right:1143px;top:208px;transform:scaleX(1.0);-webkit-text-stroke:0">buy</div>
<div class="cell r" style="right:1056px;top:208px;transform:scaleX(0.89)">0.01</div>
<div class="cell r" style="right:945px;top:208px;transform:scaleX(1.0);-webkit-text-stroke:0">gbpusd</div>
<div class="cell r" style="right:836px;top:208px;transform:scaleX(0.89)">1.22731</div>
<div class="cell r" style="right:726px;top:208px;transform:scaleX(0.89)">0.00000</div>
<div class="cell r" style="right:616px;top:208px;transform:scaleX(0.89)">1.22683</div>
<div class="cell r" style="right:373px;top:208px;transform:scaleX(0.89)">2017.03.16 13:48:24</div>
<div class="cell r" style="right:263px;top:208px;transform:scaleX(0.89)">1.22683</div>
<div class="cell r" style="right:153px;top:208px;transform:scaleX(0.89)">0.00</div>
<div class="cell r" style="right:22px;top:208px;transform:scaleX(0.89)">-27.83</div>
<div class="a" style="left:934px;top:226px;width:109px;height:19px;background:#fbf6fb"></div>
<div class="a" style="left:935px;top:226px;width:107px;height:18px;background:#62ec62"></div>
<svg class="a" style="left:22px;top:227px" width="17" height="17"><path d="M1.6 1.5H9.2L12.4 4.6V14.4H1.6Z" fill="url(#gdoc)" stroke="#4a4a4a" stroke-width="1.05" stroke-linejoin="round"/><path d="M9.4 1.8V4.4H12.2" fill="#fff" stroke="#4a4a4a" stroke-width="0.9"/><circle cx="11.6" cy="13.2" r="3.5" fill="url(#gb)" stroke="#1a64b0" stroke-width="0.7"/></svg>
<div class="t l" style="left:42px;top:228px;transform:scaleX(0.89);-webkit-text-stroke:0.25px #000">389450127</div>
<div class="cell r" style="right:1254px;top:228px;transform:scaleX(0.89)">2017.03.16 12:30:20</div>
<div class="cell r" style="right:1143px;top:228px;transform:scaleX(1.0);-webkit-text-stroke:0">buy</div>
<div class="cell r" style="right:1056px;top:228px;transform:scaleX(0.89)">0.01</div>
<div class="cell r" style="right:945px;top:228px;transform:scaleX(1.0);-webkit-text-stroke:0">usdjpy</div>
<div class="cell r" style="right:836px;top:228px;transform:scaleX(0.89)">113.482</div>
<div class="cell r" style="right:726px;top:228px;transform:scaleX(0.89)">0.000</div>
<div class="cell r" style="right:616px;top:228px;transform:scaleX(0.89)">113.512</div>
<div class="cell r" style="right:373px;top:228px;transform:scaleX(0.89)">2017.03.16 12:52:31</div>
<div class="cell r" style="right:263px;top:228px;transform:scaleX(0.89)">113.512</div>
<div class="cell r" style="right:153px;top:228px;transform:scaleX(0.89)">0.00</div>
<div class="cell r" style="right:22px;top:228px;transform:scaleX(0.89)">15.31</div>
<div class="a" style="left:934px;top:246px;width:109px;height:19px;background:#fbf6fb"></div>
<div class="a" style="left:935px;top:246px;width:107px;height:18px;background:#62ec62"></div>
<svg class="a" style="left:22px;top:247px" width="17" height="17"><path d="M1.6 1.5H9.2L12.4 4.6V14.4H1.6Z" fill="url(#gdoc)" stroke="#4a4a4a" stroke-width="1.05" stroke-linejoin="round"/><path d="M9.4 1.8V4.4H12.2" fill="#fff" stroke="#4a4a4a" stroke-width="0.9"/><circle cx="11.6" cy="13.2" r="3.5" fill="url(#gb)" stroke="#1a64b0" stroke-width="0.7"/></svg>
<div class="t l" style="left:42px;top:248px;transform:scaleX(0.89);-webkit-text-stroke:0.25px #000">389455730</div>
<div class="cell r" style="right:1254px;top:248px;transform:scaleX(0.89)">2017.03.16 12:45:00</div>
<div class="cell r" style="right:1143px;top:248px;transform:scaleX(1.0);-webkit-text-stroke:0">buy</div>
<div class="cell r" style="right:1056px;top:248px;transform:scaleX(0.89)">0.02</div>
<div class="cell r" style="right:945px;top:248px;transform:scaleX(1.0);-webkit-text-stroke:0">gbpusd</div>
<div class="cell r" style="right:836px;top:248px;transform:scaleX(0.89)">1.22679</div>
<div class="cell r" style="right:726px;top:248px;transform:scaleX(0.89)">0.00000</div>
<div class="cell r" style="right:616px;top:248px;transform:scaleX(0.89)">1.22683</div>
<div class="cell r" style="right:373px;top:248px;transform:scaleX(0.89)">2017.03.16 13:48:24</div>
<div class="cell r" style="right:263px;top:248px;transform:scaleX(0.89)">1.22683</div>
<div class="cell r" style="right:153px;top:248px;transform:scaleX(0.89)">0.00</div>
<div class="cell r" style="right:22px;top:248px;transform:scaleX(0.89)">4.63</div>
<div class="a" style="left:934px;top:266px;width:109px;height:19px;background:#fbf6fb"></div>
<div class="a" style="left:935px;top:266px;width:107px;height:18px;background:#62ec62"></div>
<svg class="a" style="left:22px;top:267px" width="17" height="17"><path d="M1.6 1.5H9.2L12.4 4.6V14.4H1.6Z" fill="url(#gdoc)" stroke="#4a4a4a" stroke-width="1.05" stroke-linejoin="round"/><path d="M9.4 1.8V4.4H12.2" fill="#fff" stroke="#4a4a4a" stroke-width="0.9"/><circle cx="11.6" cy="13.2" r="3.5" fill="url(#gs)" stroke="#b83208" stroke-width="0.7"/></svg>
<div class="t l" style="left:42px;top:268px;transform:scaleX(0.89);-webkit-text-stroke:0.25px #000">389462335</div>
<div class="cell r" style="right:1254px;top:268px;transform:scaleX(0.89)">2017.03.16 13:00:00</div>
<div class="cell r" style="right:1143px;top:268px;transform:scaleX(1.0);-webkit-text-stroke:0">sell</div>
<div class="cell r" style="right:1056px;top:268px;transform:scaleX(0.89)">0.01</div>
<div class="cell r" style="right:945px;top:268px;transform:scaleX(1.0);-webkit-text-stroke:0">usdchf</div>
<div class="cell r" style="right:836px;top:268px;transform:scaleX(0.89)">0.99873</div>
<div class="cell r" style="right:726px;top:268px;transform:scaleX(0.89)">0.00000</div>
<div class="cell r" style="right:616px;top:268px;transform:scaleX(0.89)">0.99803</div>
<div class="cell r" style="right:373px;top:268px;transform:scaleX(0.89)">2017.03.16 13:06:07</div>
<div class="cell r" style="right:263px;top:268px;transform:scaleX(0.89)">0.99803</div>
<div class="cell r" style="right:153px;top:268px;transform:scaleX(0.89)">0.00</div>
<div class="cell r" style="right:22px;top:268px;transform:scaleX(0.89)">40.80</div>
<div class="a" style="left:934px;top:286px;width:109px;height:19px;background:#fbf6fb"></div>
<div class="a" style="left:935px;top:286px;width:107px;height:18px;background:#62ec62"></div>
<svg class="a" style="left:22px;top:287px" width="17" height="17"><path d="M1.6 1.5H9.2L12.4 4.6V14.4H1.6Z" fill="url(#gdoc)" stroke="#4a4a4a" stroke-width="1.05" stroke-linejoin="round"/><path d="M9.4 1.8V4.4H12.2" fill="#fff" stroke="#4a4a4a" stroke-width="0.9"/><circle cx="11.6" cy="13.2" r="3.5" fill="url(#gs)" stroke="#b83208" stroke-width="0.7"/></svg>
<div class="t l" style="left:42px;top:288px;transform:scaleX(0.89);-webkit-text-stroke:0.25px #000">389462443</div>
<div class="cell r" style="right:1254px;top:288px;transform:scaleX(0.89)">2017.03.16 13:00:00</div>
<div class="cell r" style="right:1143px;top:288px;transform:scaleX(1.0);-webkit-text-stroke:0">sell</div>
<div class="cell r" style="right:1056px;top:288px;transform:scaleX(0.89)">0.01</div>
<div class="cell r" style="right:945px;top:288px;transform:scaleX(1.0);-webkit-text-stroke:0">gbpusd</div>
<div class="cell r" style="right:836px;top:288px;transform:scaleX(0.89)">1.22545</div>
<div class="cell r" style="right:726px;top:288px;transform:scaleX(0.89)">0.00000</div>
<div class="cell r" style="right:616px;top:288px;transform:scaleX(0.89)">1.22515</div>
<div class="cell r" style="right:373px;top:288px;transform:scaleX(0.89)">2017.03.16 13:01:03</div>
<div class="cell r" style="right:263px;top:288px;transform:scaleX(0.89)">1.22515</div>
<div class="cell r" style="right:153px;top:288px;transform:scaleX(0.89)">0.00</div>
<div class="cell r" style="right:22px;top:288px;transform:scaleX(0.89)">17.44</div>
<div class="a" style="left:934px;top:306px;width:109px;height:19px;background:#fbf6fb"></div>
<div class="a" style="left:935px;top:306px;width:107px;height:18px;background:#62ec62"></div>
<svg class="a" style="left:22px;top:307px" width="17" height="17"><path d="M1.6 1.5H9.2L12.4 4.6V14.4H1.6Z" fill="url(#gdoc)" stroke="#4a4a4a" stroke-width="1.05" stroke-linejoin="round"/><path d="M9.4 1.8V4.4H12.2" fill="#fff" stroke="#4a4a4a" stroke-width="0.9"/><circle cx="11.6" cy="13.2" r="3.5" fill="url(#gs)" stroke="#b83208" stroke-width="0.7"/></svg>
<div class="t l" style="left:42px;top:308px;transform:scaleX(0.89);-webkit-text-stroke:0.25px #000">389462449</div>
<div class="cell r" style="right:1254px;top:308px;transform:scaleX(0.89)">2017.03.16 13:00:00</div>
<div class="cell r" style="right:1143px;top:308px;transform:scaleX(1.0);-webkit-text-stroke:0">sell</div>
<div class="cell r" style="right:1056px;top:308px;transform:scaleX(0.89)">0.03</div>
<div class="cell r" style="right:945px;top:308px;transform:scaleX(1.0);-webkit-text-stroke:0">eurgbp</div>
<div class="cell r" style="right:836px;top:308px;transform:scaleX(0.89)">0.87498</div>
<div class="cell r" style="right:726px;top:308px;transform:scaleX(0.89)">0.00000</div>
<div class="cell r" style="right:616px;top:308px;transform:scaleX(0.89)">0.87435</div>
<div class="cell r" style="right:373px;top:308px;transform:scaleX(0.89)">2017.03.16 13:45:19</div>
<div class="cell r" style="right:263px;top:308px;transform:scaleX(0.89)">0.87435</div>
<div class="cell r" style="right:153px;top:308px;transform:scaleX(0.89)">0.00</div>
<div class="cell r" style="right:22px;top:308px;transform:scaleX(0.89)">134.84</div>
<div class="a" style="left:934px;top:326px;width:109px;height:19px;background:#fbf6fb"></div>
<div class="a" style="left:935px;top:326px;width:107px;height:18px;background:#62ec62"></div>
<svg class="a" style="left:22px;top:327px" width="17" height="17"><path d="M1.6 1.5H9.2L12.4 4.6V14.4H1.6Z" fill="url(#gdoc)" stroke="#4a4a4a" stroke-width="1.05" stroke-linejoin="round"/><path d="M9.4 1.8V4.4H12.2" fill="#fff" stroke="#4a4a4a" stroke-width="0.9"/><circle cx="11.6" cy="13.2" r="3.5" fill="url(#gb)" stroke="#1a64b0" stroke-width="0.7"/></svg>
<div class="t l" style="left:42px;top:328px;transform:scaleX(0.89);-webkit-text-stroke:0.25px #000">389462461</div>
<div class="cell r" style="right:1254px;top:328px;transform:scaleX(0.89)">2017.03.16 13:00:00</div>
<div class="cell r" style="right:1143px;top:328px;transform:scaleX(1.0);-webkit-text-stroke:0">buy</div>
<div class="cell r" style="right:1056px;top:328px;transform:scaleX(0.89)">0.01</div>
<div class="cell r" style="right:945px;top:328px;transform:scaleX(1.0);-webkit-text-stroke:0">gbpusd</div>
<div class="cell r" style="right:836px;top:328px;transform:scaleX(0.89)">1.22558</div>
<div class="cell r" style="right:726px;top:328px;transform:scaleX(0.89)">0.00000</div>
<div class="cell r" style="right:616px;top:328px;transform:scaleX(0.89)">1.22737</div>
<div class="cell r" style="right:373px;top:328px;transform:scaleX(0.89)">2017.03.16 14:00:03</div>
<div class="cell r" style="right:263px;top:328px;transform:scaleX(0.89)">1.22737</div>
<div class="cell r" style="right:153px;top:328px;transform:scaleX(0.89)">0.00</div>
<div class="cell r" style="right:22px;top:328px;transform:scaleX(0.89)">103.81</div>
<div class="a" style="left:934px;top:346px;width:109px;height:19px;background:#fbf6fb"></div>
<div class="a" style="left:935px;top:346px;width:107px;height:18px;background:#62ec62"></div>
<svg class="a" style="left:22px;top:347px" width="17" height="17"><path d="M1.6 1.5H9.2L12.4 4.6V14.4H1.6Z" fill="url(#gdoc)" stroke="#4a4a4a" stroke-width="1.05" stroke-linejoin="round"/><path d="M9.4 1.8V4.4H12.2" fill="#fff" stroke="#4a4a4a" stroke-width="0.9"/><circle cx="11.6" cy="13.2" r="3.5" fill="url(#gb)" stroke="#1a64b0" stroke-width="0.7"/></svg>
<div class="t l" style="left:42px;top:348px;transform:scaleX(0.89);-webkit-text-stroke:0.25px #000">389462479</div>
<div class="cell r" style="right:1254px;top:348px;transform:scaleX(0.89)">2017.03.16 13:00:00</div>
<div class="cell r" style="right:1143px;top:348px;transform:scaleX(1.0);-webkit-text-stroke:0">buy</div>
<div class="cell r" style="right:1056px;top:348px;transform:scaleX(0.89)">0.01</div>
<div class="cell r" style="right:945px;top:348px;transform:scaleX(1.0);-webkit-text-stroke:0">usdjpy</div>
<div class="cell r" style="right:836px;top:348px;transform:scaleX(0.89)">113.500</div>
<div class="cell r" style="right:726px;top:348px;transform:scaleX(0.89)">0.000</div>
<div class="cell r" style="right:616px;top:348px;transform:scaleX(0.89)">113.530</div>
<div class="cell r" style="right:373px;top:348px;transform:scaleX(0.89)">2017.03.16 13:08:28</div>
<div class="cell r" style="right:263px;top:348px;transform:scaleX(0.89)">113.530</div>
<div class="cell r" style="right:153px;top:348px;transform:scaleX(0.89)">0.00</div>
<div class="cell r" style="right:22px;top:348px;transform:scaleX(0.89)">15.34</div>
<div class="a" style="left:934px;top:366px;width:109px;height:19px;background:#fbf6fb"></div>
<div class="a" style="left:935px;top:366px;width:107px;height:18px;background:#62ec62"></div>
<svg class="a" style="left:22px;top:367px" width="17" height="17"><path d="M1.6 1.5H9.2L12.4 4.6V14.4H1.6Z" fill="url(#gdoc)" stroke="#4a4a4a" stroke-width="1.05" stroke-linejoin="round"/><path d="M9.4 1.8V4.4H12.2" fill="#fff" stroke="#4a4a4a" stroke-width="0.9"/><circle cx="11.6" cy="13.2" r="3.5" fill="url(#gb)" stroke="#1a64b0" stroke-width="0.7"/></svg>
<div class="t l" style="left:42px;top:368px;transform:scaleX(0.89);-webkit-text-stroke:0.25px #000">389462732</div>
<div class="cell r" style="right:1254px;top:368px;transform:scaleX(0.89)">2017.03.16 13:00:06</div>
<div class="cell r" style="right:1143px;top:368px;transform:scaleX(1.0);-webkit-text-stroke:0">buy</div>
<div class="cell r" style="right:1056px;top:368px;transform:scaleX(0.89)">0.01</div>
<div class="cell r" style="right:945px;top:368px;transform:scaleX(1.0);-webkit-text-stroke:0">eurgbp</div>
<div class="cell r" style="right:836px;top:368px;transform:scaleX(0.89)">0.87514</div>
<div class="cell r" style="right:726px;top:368px;transform:scaleX(0.89)">0.00000</div>
<div class="cell r" style="right:616px;top:368px;transform:scaleX(0.89)">0.87544</div>
<div class="cell r" style="right:373px;top:368px;transform:scaleX(0.89)">2017.03.16 13:00:27</div>
<div class="cell r" style="right:263px;top:368px;transform:scaleX(0.89)">0.87544</div>
<div class="cell r" style="right:153px;top:368px;transform:scaleX(0.89)">0.00</div>
<div class="cell r" style="right:22px;top:368px;transform:scaleX(0.89)">21.30</div>
<div class="a" style="left:934px;top:386px;width:109px;height:19px;background:#fbf6fb"></div>
<div class="a" style="left:935px;top:386px;width:107px;height:18px;background:#62ec62"></div>
<svg class="a" style="left:22px;top:387px" width="17" height="17"><path d="M1.6 1.5H9.2L12.4 4.6V14.4H1.6Z" fill="url(#gdoc)" stroke="#4a4a4a" stroke-width="1.05" stroke-linejoin="round"/><path d="M9.4 1.8V4.4H12.2" fill="#fff" stroke="#4a4a4a" stroke-width="0.9"/><circle cx="11.6" cy="13.2" r="3.5" fill="url(#gs)" stroke="#b83208" stroke-width="0.7"/></svg>
<div class="t l" style="left:42px;top:388px;transform:scaleX(0.89);-webkit-text-stroke:0.25px #000">389470901</div>
<div class="cell r" style="right:1254px;top:388px;transform:scaleX(0.89)">2017.03.16 13:15:01</div>
<div class="cell r" style="right:1143px;top:388px;transform:scaleX(1.0);-webkit-text-stroke:0">sell</div>
<div class="cell r" style="right:1056px;top:388px;transform:scaleX(0.89)">0.03</div>
<div class="cell r" style="right:945px;top:388px;transform:scaleX(1.0);-webkit-text-stroke:0">usdjpy</div>
<div class="cell r" style="right:836px;top:388px;transform:scaleX(0.89)">113.501</div>
<div class="cell r" style="right:726px;top:388px;transform:scaleX(0.89)">0.000</div>
<div class="cell r" style="right:616px;top:388px;transform:scaleX(0.89)">113.424</div>
<div class="cell r" style="right:373px;top:388px;transform:scaleX(0.89)">2017.03.16 13:41:56</div>
<div class="cell r" style="right:263px;top:388px;transform:scaleX(0.89)">113.424</div>
<div class="cell r" style="right:153px;top:388px;transform:scaleX(0.89)">0.00</div>
<div class="cell r" style="right:22px;top:388px;transform:scaleX(0.89)">118.45</div>
<div class="a" style="left:934px;top:406px;width:109px;height:19px;background:#fbf6fb"></div>
<div class="a" style="left:935px;top:406px;width:107px;height:18px;background:#62ec62"></div>
<svg class="a" style="left:22px;top:407px" width="17" height="17"><path d="M1.6 1.5H9.2L12.4 4.6V14.4H1.6Z" fill="url(#gdoc)" stroke="#4a4a4a" stroke-width="1.05" stroke-linejoin="round"/><path d="M9.4 1.8V4.4H12.2" fill="#fff" stroke="#4a4a4a" stroke-width="0.9"/><circle cx="11.6" cy="13.2" r="3.5" fill="url(#gs)" stroke="#b83208" stroke-width="0.7"/></svg>
<div class="t l" style="left:42px;top:408px;transform:scaleX(0.89);-webkit-text-stroke:0.25px #000">389470944</div>
<div class="cell r" style="right:1254px;top:408px;transform:scaleX(0.89)">2017.03.16 13:15:03</div>
<div class="cell r" style="right:1143px;top:408px;transform:scaleX(1.0);-webkit-text-stroke:0">sell</div>
<div class="cell r" style="right:1056px;top:408px;transform:scaleX(0.89)">0.05</div>
<div class="cell r" style="right:945px;top:408px;transform:scaleX(1.0);-webkit-text-stroke:0">eurgbp</div>
<div class="cell r" style="right:836px;top:408px;transform:scaleX(0.89)">0.87534</div>
<div class="cell r" style="right:726px;top:408px;transform:scaleX(0.89)">0.00000</div>
<div class="cell r" style="right:616px;top:408px;transform:scaleX(0.89)">0.87435</div>
<div class="cell r" style="right:373px;top:408px;transform:scaleX(0.89)">2017.03.16 13:45:19</div>
<div class="cell r" style="right:263px;top:408px;transform:scaleX(0.89)">0.87435</div>
<div class="cell r" style="right:153px;top:408px;transform:scaleX(0.89)">0.00</div>
<div class="cell r" style="right:22px;top:408px;transform:scaleX(0.89)">353.13</div>
<div class="a" style="left:934px;top:426px;width:109px;height:19px;background:#fbf6fb"></div>
<div class="a" style="left:935px;top:426px;width:107px;height:18px;background:#62ec62"></div>
<svg class="a" style="left:22px;top:427px" width="17" height="17"><path d="M1.6 1.5H9.2L12.4 4.6V14.4H1.6Z" fill="url(#gdoc)" stroke="#4a4a4a" stroke-width="1.05" stroke-linejoin="round"/><path d="M9.4 1.8V4.4H12.2" fill="#fff" stroke="#4a4a4a" stroke-width="0.9"/><circle cx="11.6" cy="13.2" r="3.5" fill="url(#gs)" stroke="#b83208" stroke-width="0.7"/></svg>
<div class="t l" style="left:42px;top:428px;transform:scaleX(0.89);-webkit-text-stroke:0.25px #000">389471044</div>
<div class="cell r" style="right:1254px;top:428px;transform:scaleX(0.89)">2017.03.16 13:15:11</div>
<div class="cell r" style="right:1143px;top:428px;transform:scaleX(1.0);-webkit-text-stroke:0">sell</div>
<div class="cell r" style="right:1056px;top:428px;transform:scaleX(0.89)">0.02</div>
<div class="cell r" style="right:945px;top:428px;transform:scaleX(1.0);-webkit-text-stroke:0">usdjpy</div>
<div class="cell r" style="right:836px;top:428px;transform:scaleX(0.89)">113.498</div>
<div class="cell r" style="right:726px;top:428px;transform:scaleX(0.89)">0.000</div>
<div class="cell r" style="right:616px;top:428px;transform:scaleX(0.89)">113.438</div>
<div class="cell r" style="right:373px;top:428px;transform:scaleX(0.89)">2017.03.16 13:29:53</div>
<div class="cell r" style="right:263px;top:428px;transform:scaleX(0.89)">113.438</div>
<div class="cell r" style="right:153px;top:428px;transform:scaleX(0.89)">0.00</div>
<div class="cell r" style="right:22px;top:428px;transform:scaleX(0.89)">61.52</div>
<div class="a" style="left:934px;top:446px;width:109px;height:19px;background:#fbf6fb"></div>
<div class="a" style="left:935px;top:446px;width:107px;height:18px;background:#62ec62"></div>
<svg class="a" style="left:22px;top:447px" width="17" height="17"><path d="M1.6 1.5H9.2L12.4 4.6V14.4H1.6Z" fill="url(#gdoc)" stroke="#4a4a4a" stroke-width="1.05" stroke-linejoin="round"/><path d="M9.4 1.8V4.4H12.2" fill="#fff" stroke="#4a4a4a" stroke-width="0.9"/><circle cx="11.6" cy="13.2" r="3.5" fill="url(#gb)" stroke="#1a64b0" stroke-width="0.7"/></svg>
<div class="t l" style="left:42px;top:448px;transform:scaleX(0.89);-webkit-text-stroke:0.25px #000">389477660</div>
<div class="cell r" style="right:1254px;top:448px;transform:scaleX(0.89)">2017.03.16 13:30:03</div>
<div class="cell r" style="right:1143px;top:448px;transform:scaleX(1.0);-webkit-text-stroke:0">buy</div>
<div class="cell r" style="right:1056px;top:448px;transform:scaleX(0.89)">0.01</div>
<div class="cell r" style="right:945px;top:448px;transform:scaleX(1.0);-webkit-text-stroke:0">gbpusd</div>
<div class="cell r" style="right:836px;top:448px;transform:scaleX(0.89)">1.22589</div>
<div class="cell r" style="right:726px;top:448px;transform:scaleX(0.89)">0.00000</div>
<div class="cell r" style="right:616px;top:448px;transform:scaleX(0.89)">1.22619</div>
<div class="cell r" style="right:373px;top:448px;transform:scaleX(0.89)">2017.03.16 13:33:31</div>
<div class="cell r" style="right:263px;top:448px;transform:scaleX(0.89)">1.22619</div>
<div class="cell r" style="right:153px;top:448px;transform:scaleX(0.89)">0.00</div>
<div class="cell r" style="right:22px;top:448px;transform:scaleX(0.89)">17.39</div>
<div class="a" style="left:934px;top:466px;width:109px;height:19px;background:#fbf6fb"></div>
<div class="a" style="left:935px;top:466px;width:107px;height:18px;background:#62ec62"></div>
<svg class="a" style="left:22px;top:467px" width="17" height="17"><path d="M1.6 1.5H9.2L12.4 4.6V14.4H1.6Z" fill="url(#gdoc)" stroke="#4a4a4a" stroke-width="1.05" stroke-linejoin="round"/><path d="M9.4 1.8V4.4H12.2" fill="#fff" stroke="#4a4a4a" stroke-width="0.9"/><circle cx="11.6" cy="13.2" r="3.5" fill="url(#gb)" stroke="#1a64b0" stroke-width="0.7"/></svg>
<div class="t l" style="left:42px;top:468px;transform:scaleX(0.89);-webkit-text-stroke:0.25px #000">389477679</div>
<div class="cell r" style="right:1254px;top:468px;transform:scaleX(0.89)">2017.03.16 13:30:03</div>
<div class="cell r" style="right:1143px;top:468px;transform:scaleX(1.0);-webkit-text-stroke:0">buy</div>
<div class="cell r" style="right:1056px;top:468px;transform:scaleX(0.89)">0.02</div>
<div class="cell r" style="right:945px;top:468px;transform:scaleX(1.0);-webkit-text-stroke:0">gbpusd</div>
<div class="cell r" style="right:836px;top:468px;transform:scaleX(0.89)">1.22588</div>
<div class="cell r" style="right:726px;top:468px;transform:scaleX(0.89)">0.00000</div>
<div class="cell r" style="right:616px;top:468px;transform:scaleX(0.89)">1.22683</div>
<div class="cell r" style="right:373px;top:468px;transform:scaleX(0.89)">2017.03.16 13:48:24</div>
<div class="cell r" style="right:263px;top:468px;transform:scaleX(0.89)">1.22683</div>
<div class="cell r" style="right:153px;top:468px;transform:scaleX(0.89)">0.00</div>
<div class="cell r" style="right:22px;top:468px;transform:scaleX(0.89)">110.15</div>
<div class="a" style="left:934px;top:486px;width:109px;height:19px;background:#fbf6fb"></div>
<div class="a" style="left:935px;top:486px;width:107px;height:18px;background:#62ec62"></div>
<svg class="a" style="left:22px;top:487px" width="17" height="17"><path d="M1.6 1.5H9.2L12.4 4.6V14.4H1.6Z" fill="url(#gdoc)" stroke="#4a4a4a" stroke-width="1.05" stroke-linejoin="round"/><path d="M9.4 1.8V4.4H12.2" fill="#fff" stroke="#4a4a4a" stroke-width="0.9"/><circle cx="11.6" cy="13.2" r="3.5" fill="url(#gs)" stroke="#b83208" stroke-width="0.7"/></svg>
<div class="t l" style="left:42px;top:488px;transform:scaleX(0.89);-webkit-text-stroke:0.25px #000">389484322</div>
<div class="cell r" style="right:1254px;top:488px;transform:scaleX(0.89)">2017.03.16 13:45:01</div>
<div class="cell r" style="right:1143px;top:488px;transform:scaleX(1.0);-webkit-text-stroke:0">sell</div>
<div class="cell r" style="right:1056px;top:488px;transform:scaleX(0.89)">0.01</div>
<div class="cell r" style="right:945px;top:488px;transform:scaleX(1.0);-webkit-text-stroke:0">usdjpy</div>
<div class="cell r" style="right:836px;top:488px;transform:scaleX(0.89)">113.435</div>
<div class="cell r" style="right:726px;top:488px;transform:scaleX(0.89)">0.000</div>
<div class="cell r" style="right:616px;top:488px;transform:scaleX(0.89)">113.405</div>
<div class="cell r" style="right:373px;top:488px;transform:scaleX(0.89)">2017.03.16 13:48:22</div>
<div class="cell r" style="right:263px;top:488px;transform:scaleX(0.89)">113.405</div>
<div class="cell r" style="right:153px;top:488px;transform:scaleX(0.89)">0.00</div>
<div class="cell r" style="right:22px;top:488px;transform:scaleX(0.89)">15.39</div>
<div class="a" style="left:934px;top:506px;width:109px;height:19px;background:#fbf6fb"></div>
<div class="a" style="left:935px;top:506px;width:107px;height:18px;background:#62ec62"></div>
<svg class="a" style="left:22px;top:507px" width="17" height="17"><path d="M1.6 1.5H9.2L12.4 4.6V14.4H1.6Z" fill="url(#gdoc)" stroke="#4a4a4a" stroke-width="1.05" stroke-linejoin="round"/><path d="M9.4 1.8V4.4H12.2" fill="#fff" stroke="#4a4a4a" stroke-width="0.9"/><circle cx="11.6" cy="13.2" r="3.5" fill="url(#gs)" stroke="#b83208" stroke-width="0.7"/></svg>
<div class="t l" style="left:42px;top:508px;transform:scaleX(0.89);-webkit-text-stroke:0.25px #000">389490483</div>
<div class="cell r" style="right:1254px;top:508px;transform:scaleX(0.89)">2017.03.16 14:00:07</div>
<div class="cell r" style="right:1143px;top:508px;transform:scaleX(1.0);-webkit-text-stroke:0">sell</div>
<div class="cell r" style="right:1056px;top:508px;transform:scaleX(0.89)">0.01</div>
<div class="cell r" style="right:945px;top:508px;transform:scaleX(1.0);-webkit-text-stroke:0">usdjpy</div>
<div class="cell r" style="right:836px;top:508px;transform:scaleX(0.89)">113.349</div>
<div class="cell r" style="right:726px;top:508px;transform:scaleX(0.89)">0.000</div>
<div class="cell r" style="right:616px;top:508px;transform:scaleX(0.89)">113.341</div>
<div class="cell r" style="right:373px;top:508px;transform:scaleX(0.89)">2017.03.16 14:16:46</div>
<div class="cell r" style="right:263px;top:508px;transform:scaleX(0.89)">113.341</div>
<div class="cell r" style="right:153px;top:508px;transform:scaleX(0.89)">0.00</div>
<div class="cell r" style="right:22px;top:508px;transform:scaleX(0.89)">4.10</div>
<div class="a" style="left:934px;top:526px;width:109px;height:19px;background:#fbf6fb"></div>
<div class="a" style="left:935px;top:526px;width:107px;height:18px;background:#62ec62"></div>
<svg class="a" style="left:22px;top:527px" width="17" height="17"><path d="M1.6 1.5H9.2L12.4 4.6V14.4H1.6Z" fill="url(#gdoc)" stroke="#4a4a4a" stroke-width="1.05" stroke-linejoin="round"/><path d="M9.4 1.8V4.4H12.2" fill="#fff" stroke="#4a4a4a" stroke-width="0.9"/><circle cx="11.6" cy="13.2" r="3.5" fill="url(#gs)" stroke="#b83208" stroke-width="0.7"/></svg>
<div class="t l" style="left:42px;top:528px;transform:scaleX(0.89);-webkit-text-stroke:0.25px #000">389490485</div>
<div class="cell r" style="right:1254px;top:528px;transform:scaleX(0.89)">2017.03.16 14:00:07</div>
<div class="cell r" style="right:1143px;top:528px;transform:scaleX(1.0);-webkit-text-stroke:0">sell</div>
<div class="cell r" style="right:1056px;top:528px;transform:scaleX(0.89)">0.01</div>
<div class="cell r" style="right:945px;top:528px;transform:scaleX(1.0);-webkit-text-stroke:0">usdchf</div>
<div class="cell r" style="right:836px;top:528px;transform:scaleX(0.89)">0.99736</div>
<div class="cell r" style="right:726px;top:528px;transform:scaleX(0.89)">0.00000</div>
<div class="cell r" style="right:616px;top:528px;transform:scaleX(0.89)">0.99666</div>
<div class="cell r" style="right:373px;top:528px;transform:scaleX(0.89)">2017.03.16 14:52:16</div>
<div class="cell r" style="right:263px;top:528px;transform:scaleX(0.89)">0.99666</div>
<div class="cell r" style="right:153px;top:528px;transform:scaleX(0.89)">0.00</div>
<div class="cell r" style="right:22px;top:528px;transform:scaleX(0.89)">40.78</div>
<div class="a" style="left:934px;top:546px;width:109px;height:19px;background:#fbf6fb"></div>
<div class="a" style="left:935px;top:546px;width:107px;height:18px;background:#62ec62"></div>
<svg class="a" style="left:22px;top:547px" width="17" height="17"><path d="M1.6 1.5H9.2L12.4 4.6V14.4H1.6Z" fill="url(#gdoc)" stroke="#4a4a4a" stroke-width="1.05" stroke-linejoin="round"/><path d="M9.4 1.8V4.4H12.2" fill="#fff" stroke="#4a4a4a" stroke-width="0.9"/><circle cx="11.6" cy="13.2" r="3.5" fill="url(#gs)" stroke="#b83208" stroke-width="0.7"/></svg>
<div class="t l" style="left:42px;top:548px;transform:scaleX(0.89);-webkit-text-stroke:0.25px #000">389499638</div>
<div class="cell r" style="right:1254px;top:548px;transform:scaleX(0.89)">2017.03.16 14:15:00</div>
<div class="cell r" style="right:1143px;top:548px;transform:scaleX(1.0);-webkit-text-stroke:0">sell</div>
<div class="cell r" style="right:1056px;top:548px;transform:scaleX(0.89)">0.01</div>
<div class="cell r" style="right:945px;top:548px;transform:scaleX(1.0);-webkit-text-stroke:0">eurgbp</div>
<div class="cell r" style="right:836px;top:548px;transform:scaleX(0.89)">0.86901</div>
<div class="cell r" style="right:726px;top:548px;transform:scaleX(0.89)">0.00000</div>
<div class="cell r" style="right:616px;top:548px;transform:scaleX(0.89)">0.86871</div>
<div class="cell r" style="right:373px;top:548px;transform:scaleX(0.89)">2017.03.16 14:16:08</div>
<div class="cell r" style="right:263px;top:548px;transform:scaleX(0.89)">0.86871</div>
<div class="cell r" style="right:153px;top:548px;transform:scaleX(0.89)">0.00</div>
<div class="cell r" style="right:22px;top:548px;transform:scaleX(0.89)">21.53</div>
<div class="a" style="left:934px;top:566px;width:109px;height:19px;background:#fbf6fb"></div>
<div class="a" style="left:935px;top:566px;width:107px;height:18px;background:#62ec62"></div>
<svg class="a" style="left:22px;top:567px" width="17" height="17"><path d="M1.6 1.5H9.2L12.4 4.6V14.4H1.6Z" fill="url(#gdoc)" stroke="#4a4a4a" stroke-width="1.05" stroke-linejoin="round"/><path d="M9.4 1.8V4.4H12.2" fill="#fff" stroke="#4a4a4a" stroke-width="0.9"/><circle cx="11.6" cy="13.2" r="3.5" fill="url(#gs)" stroke="#b83208" stroke-width="0.7"/></svg>
<div class="t l" style="left:42px;top:568px;transform:scaleX(0.89);-webkit-text-stroke:0.25px #000">389499645</div>
<div class="cell r" style="right:1254px;top:568px;transform:scaleX(0.89)">2017.03.16 14:15:00</div>
<div class="cell r" style="right:1143px;top:568px;transform:scaleX(1.0);-webkit-text-stroke:0">sell</div>
<div class="cell r" style="right:1056px;top:568px;transform:scaleX(0.89)">0.02</div>
<div class="cell r" style="right:945px;top:568px;transform:scaleX(1.0);-webkit-text-stroke:0">usdjpy</div>
<div class="cell r" style="right:836px;top:568px;transform:scaleX(0.89)">113.382</div>
<div class="cell r" style="right:726px;top:568px;transform:scaleX(0.89)">0.000</div>
<div class="cell r" style="right:616px;top:568px;transform:scaleX(0.89)">113.341</div>
<div class="cell r" style="right:373px;top:568px;transform:scaleX(0.89)">2017.03.16 14:16:46</div>
<div class="cell r" style="right:263px;top:568px;transform:scaleX(0.89)">113.341</div>
<div class="cell r" style="right:153px;top:568px;transform:scaleX(0.89)">0.00</div>
<div class="cell r" style="right:22px;top:568px;transform:scaleX(0.89)">42.06</div>
<div class="a" style="left:934px;top:586px;width:109px;height:19px;background:#fbf6fb"></div>
<div class="a" style="left:935px;top:586px;width:107px;height:18px;background:#62ec62"></div>
<svg class="a" style="left:22px;top:587px" width="17" height="17"><path d="M1.6 1.5H9.2L12.4 4.6V14.4H1.6Z" fill="url(#gdoc)" stroke="#4a4a4a" stroke-width="1.05" stroke-linejoin="round"/><path d="M9.4 1.8V4.4H12.2" fill="#fff" stroke="#4a4a4a" stroke-width="0.9"/><circle cx="11.6" cy="13.2" r="3.5" fill="url(#gb)" stroke="#1a64b0" stroke-width="0.7"/></svg>
<div class="t l" style="left:42px;top:588px;transform:scaleX(0.89);-webkit-text-stroke:0.25px #000">389499810</div>
<div class="cell r" style="right:1254px;top:588px;transform:scaleX(0.89)">2017.03.16 14:15:01</div>
<div class="cell r" style="right:1143px;top:588px;transform:scaleX(1.0);-webkit-text-stroke:0">buy</div>
<div class="cell r" style="right:1056px;top:588px;transform:scaleX(0.89)">0.01</div>
<div class="cell r" style="right:945px;top:588px;transform:scaleX(1.0);-webkit-text-stroke:0">usdjpy</div>
<div class="cell r" style="right:836px;top:588px;transform:scaleX(0.89)">113.394</div>
<div class="cell r" style="right:726px;top:588px;transform:scaleX(0.89)">0.000</div>
<div class="cell r" style="right:616px;top:588px;transform:scaleX(0.89)">113.371</div>
<div class="cell r" style="right:373px;top:588px;transform:scaleX(0.89)">2017.03.16 14:31:41</div>
<div class="cell r" style="right:263px;top:588px;transform:scaleX(0.89)">113.371</div>
<div class="cell r" style="right:153px;top:588px;transform:scaleX(0.89)">0.00</div>
<div class="cell r" style="right:22px;top:588px;transform:scaleX(0.89)">-11.77</div>
<div class="a" style="left:934px;top:606px;width:109px;height:19px;background:#fbf6fb"></div>
<div class="a" style="left:935px;top:606px;width:107px;height:18px;background:#62ec62"></div>
<svg class="a" style="left:22px;top:607px" width="17" height="17"><path d="M1.6 1.5H9.2L12.4 4.6V14.4H1.6Z" fill="url(#gdoc)" stroke="#4a4a4a" stroke-width="1.05" stroke-linejoin="round"/><path d="M9.4 1.8V4.4H12.2" fill="#fff" stroke="#4a4a4a" stroke-width="0.9"/><circle cx="11.6" cy="13.2" r="3.5" fill="url(#gb)" stroke="#1a64b0" stroke-width="0.7"/></svg>
<div class="t l" style="left:42px;top:608px;transform:scaleX(0.89);-webkit-text-stroke:0.25px #000">389499847</div>
<div class="cell r" style="right:1254px;top:608px;transform:scaleX(0.89)">2017.03.16 14:15:03</div>
<div class="cell r" style="right:1143px;top:608px;transform:scaleX(1.0);-webkit-text-stroke:0">buy</div>
<div class="cell r" style="right:1056px;top:608px;transform:scaleX(0.89)">0.01</div>
<div class="cell r" style="right:945px;top:608px;transform:scaleX(1.0);-webkit-text-stroke:0">gbpusd</div>
<div class="cell r" style="right:836px;top:608px;transform:scaleX(0.89)">1.23429</div>
<div class="cell r" style="right:726px;top:608px;transform:scaleX(0.89)">0.00000</div>
<div class="cell r" style="right:616px;top:608px;transform:scaleX(0.89)">1.23459</div>
<div class="cell r" style="right:373px;top:608px;transform:scaleX(0.89)">2017.03.16 14:20:48</div>
<div class="cell r" style="right:263px;top:608px;transform:scaleX(0.89)">1.23459</div>
<div class="cell r" style="right:153px;top:608px;transform:scaleX(0.89)">0.00</div>
<div class="cell r" style="right:22px;top:608px;transform:scaleX(0.89)">17.39</div>
<div class="a" style="left:934px;top:626px;width:109px;height:19px;background:#fbf6fb"></div>
<div class="a" style="left:935px;top:626px;width:107px;height:18px;background:#62ec62"></div>
<svg class="a" style="left:22px;top:627px" width="17" height="17"><path d="M1.6 1.5H9.2L12.4 4.6V14.4H1.6Z" fill="url(#gdoc)" stroke="#4a4a4a" stroke-width="1.05" stroke-linejoin="round"/><path d="M9.4 1.8V4.4H12.2" fill="#fff" stroke="#4a4a4a" stroke-width="0.9"/><circle cx="11.6" cy="13.2" r="3.5" fill="url(#gb)" stroke="#1a64b0" stroke-width="0.7"/></svg>
<div class="t l" style="left:42px;top:628px;transform:scaleX(0.89);-webkit-text-stroke:0.25px #000">389499899</div>
<div class="cell r" style="right:1254px;top:628px;transform:scaleX(0.89)">2017.03.16 14:15:05</div>
<div class="cell r" style="right:1143px;top:628px;transform:scaleX(1.0);-webkit-text-stroke:0">buy</div>
<div class="cell r" style="right:1056px;top:628px;transform:scaleX(0.89)">0.01</div>
<div class="cell r" style="right:945px;top:628px;transform:scaleX(1.0);-webkit-text-stroke:0">gbpusd</div>
<div class="cell r" style="right:836px;top:628px;transform:scaleX(0.89)">1.23422</div>
<div class="cell r" style="right:726px;top:628px;transform:scaleX(0.89)">0.00000</div>
<div class="cell r" style="right:616px;top:628px;transform:scaleX(0.89)">1.23452</div>
<div class="cell r" style="right:373px;top:628px;transform:scaleX(0.89)">2017.03.16 14:17:20</div>
<div class="cell r" style="right:263px;top:628px;transform:scaleX(0.89)">1.23452</div>
<div class="cell r" style="right:153px;top:628px;transform:scaleX(0.89)">0.00</div>
<div class="cell r" style="right:22px;top:628px;transform:scaleX(0.89)">17.38</div>
<div class="a" style="left:934px;top:646px;width:109px;height:19px;background:#fbf6fb"></div>
<div class="a" style="left:935px;top:646px;width:107px;height:18px;background:#62ec62"></div>
<svg class="a" style="left:22px;top:647px" width="17" height="17"><path d="M1.6 1.5H9.2L12.4 4.6V14.4H1.6Z" fill="url(#gdoc)" stroke="#4a4a4a" stroke-width="1.05" stroke-linejoin="round"/><path d="M9.4 1.8V4.4H12.2" fill="#fff" stroke="#4a4a4a" stroke-width="0.9"/><circle cx="11.6" cy="13.2" r="3.5" fill="url(#gs)" stroke="#b83208" stroke-width="0.7"/></svg>
<div class="t l" style="left:42px;top:648px;transform:scaleX(0.89);-webkit-text-stroke:0.25px #000">389509526</div>
<div class="cell r" style="right:1254px;top:648px;transform:scaleX(0.89)">2017.03.16 14:30:08</div>
<div class="cell r" style="right:1143px;top:648px;transform:scaleX(1.0);-webkit-text-stroke:0">sell</div>
<div class="cell r" style="right:1056px;top:648px;transform:scaleX(0.89)">0.01</div>
<div class="cell r" style="right:945px;top:648px;transform:scaleX(1.0);-webkit-text-stroke:0">eurgbp</div>
<div class="cell r" style="right:836px;top:648px;transform:scaleX(0.89)">0.86740</div>
<div class="cell r" style="right:726px;top:648px;transform:scaleX(0.89)">0.00000</div>
<div class="cell r" style="right:616px;top:648px;transform:scaleX(0.89)">0.86759</div>
<div class="cell r" style="right:373px;top:648px;transform:scaleX(0.89)">2017.03.16 15:05:36</div>
<div class="cell r" style="right:263px;top:648px;transform:scaleX(0.89)">0.86759</div>
<div class="cell r" style="right:153px;top:648px;transform:scaleX(0.89)">0.00</div>
<div class="cell r" style="right:22px;top:648px;transform:scaleX(0.89)">-13.66</div>
<div class="a" style="left:934px;top:666px;width:109px;height:19px;background:#fbf6fb"></div>
<div class="a" style="left:935px;top:666px;width:107px;height:18px;background:#62ec62"></div>
<svg class="a" style="left:22px;top:667px" width="17" height="17"><path d="M1.6 1.5H9.2L12.4 4.6V14.4H1.6Z" fill="url(#gdoc)" stroke="#4a4a4a" stroke-width="1.05" stroke-linejoin="round"/><path d="M9.4 1.8V4.4H12.2" fill="#fff" stroke="#4a4a4a" stroke-width="0.9"/><circle cx="11.6" cy="13.2" r="3.5" fill="url(#gs)" stroke="#b83208" stroke-width="0.7"/></svg>
<div class="t l" style="left:42px;top:668px;transform:scaleX(0.89);-webkit-text-stroke:0.25px #000">389509530</div>
<div class="cell r" style="right:1254px;top:668px;transform:scaleX(0.89)">2017.03.16 14:30:08</div>
<div class="cell r" style="right:1143px;top:668px;transform:scaleX(1.0);-webkit-text-stroke:0">sell</div>
<div class="cell r" style="right:1056px;top:668px;transform:scaleX(0.89)">0.01</div>
<div class="cell r" style="right:945px;top:668px;transform:scaleX(1.0);-webkit-text-stroke:0">usdjpy</div>
<div class="cell r" style="right:836px;top:668px;transform:scaleX(0.89)">113.306</div>
<div class="cell r" style="right:726px;top:668px;transform:scaleX(0.89)">0.000</div>
<div class="cell r" style="right:616px;top:668px;transform:scaleX(0.89)">113.311</div>
<div class="cell r" style="right:373px;top:668px;transform:scaleX(0.89)">2017.03.16 14:52:34</div>
<div class="cell r" style="right:263px;top:668px;transform:scaleX(0.89)">113.311</div>
<div class="cell r" style="right:153px;top:668px;transform:scaleX(0.89)">0.00</div>
<div class="cell r" style="right:22px;top:668px;transform:scaleX(0.89)">-2.56</div>
<div class="a" style="left:934px;top:686px;width:109px;height:19px;background:#fbf6fb"></div>
<div class="a" style="left:935px;top:686px;width:107px;height:18px;background:#62ec62"></div>
<svg class="a" style="left:22px;top:687px" width="17" height="17"><path d="M1.6 1.5H9.2L12.4 4.6V14.4H1.6Z" fill="url(#gdoc)" stroke="#4a4a4a" stroke-width="1.05" stroke-linejoin="round"/><path d="M9.4 1.8V4.4H12.2" fill="#fff" stroke="#4a4a4a" stroke-width="0.9"/><circle cx="11.6" cy="13.2" r="3.5" fill="url(#gb)" stroke="#1a64b0" stroke-width="0.7"/></svg>
<div class="t l" style="left:42px;top:688px;transform:scaleX(0.89);-webkit-text-stroke:0.25px #000">389509776</div>
<div class="cell r" style="right:1254px;top:688px;transform:scaleX(0.89)">2017.03.16 14:30:20</div>
<div class="cell r" style="right:1143px;top:688px;transform:scaleX(1.0);-webkit-text-stroke:0">buy</div>
<div class="cell r" style="right:1056px;top:688px;transform:scaleX(0.89)">0.02</div>
<div class="cell r" style="right:945px;top:688px;transform:scaleX(1.0);-webkit-text-stroke:0">usdjpy</div>
<div class="cell r" style="right:836px;top:688px;transform:scaleX(0.89)">113.315</div>
<div class="cell r" style="right:726px;top:688px;transform:scaleX(0.89)">0.000</div>
<div class="cell r" style="right:616px;top:688px;transform:scaleX(0.89)">113.371</div>
<div class="cell r" style="right:373px;top:688px;transform:scaleX(0.89)">2017.03.16 14:31:41</div>
<div class="cell r" style="right:263px;top:688px;transform:scaleX(0.89)">113.371</div>
<div class="cell r" style="right:153px;top:688px;transform:scaleX(0.89)">0.00</div>
<div class="cell r" style="right:22px;top:688px;transform:scaleX(0.89)">57.30</div>
<div class="a" style="left:934px;top:706px;width:109px;height:19px;background:#fbf6fb"></div>
<div class="a" style="left:935px;top:706px;width:107px;height:18px;background:#62ec62"></div>
<svg class="a" style="left:22px;top:707px" width="17" height="17"><path d="M1.6 1.5H9.2L12.4 4.6V14.4H1.6Z" fill="url(#gdoc)" stroke="#4a4a4a" stroke-width="1.05" stroke-linejoin="round"/><path d="M9.4 1.8V4.4H12.2" fill="#fff" stroke="#4a4a4a" stroke-width="0.9"/><circle cx="11.6" cy="13.2" r="3.5" fill="url(#gb)" stroke="#1a64b0" stroke-width="0.7"/></svg>
<div class="t l" style="left:42px;top:708px;transform:scaleX(0.89);-webkit-text-stroke:0.25px #000">389510042</div>
<div class="cell r" style="right:1254px;top:708px;transform:scaleX(0.89)">2017.03.16 14:30:45</div>
<div class="cell r" style="right:1143px;top:708px;transform:scaleX(1.0);-webkit-text-stroke:0">buy</div>
<div class="cell r" style="right:1056px;top:708px;transform:scaleX(0.89)">0.01</div>
<div class="cell r" style="right:945px;top:708px;transform:scaleX(1.0);-webkit-text-stroke:0">gbpusd</div>
<div class="cell r" style="right:836px;top:708px;transform:scaleX(0.89)">1.23559</div>
<div class="cell r" style="right:726px;top:708px;transform:scaleX(0.89)">0.00000</div>
<div class="cell r" style="right:616px;top:708px;transform:scaleX(0.89)">1.23589</div>
<div class="cell r" style="right:373px;top:708px;transform:scaleX(0.89)">2017.03.16 14:39:07</div>
<div class="cell r" style="right:263px;top:708px;transform:scaleX(0.89)">1.23589</div>
<div class="cell r" style="right:153px;top:708px;transform:scaleX(0.89)">0.00</div>
<div class="cell r" style="right:22px;top:708px;transform:scaleX(0.89)">17.40</div>
<svg class="a" style="left:22px;top:727px" width="17" height="17"><path d="M1.6 1.5H9.2L12.4 4.6V14.4H1.6Z" fill="url(#gdoc)" stroke="#4a4a4a" stroke-width="1.05" stroke-linejoin="round"/><path d="M9.4 1.8V4.4H12.2" fill="#fff" stroke="#4a4a4a" stroke-width="0.9"/><circle cx="11.6" cy="13.2" r="3.5" fill="url(#gs)" stroke="#b83208" stroke-width="0.7"/></svg>
<div class="t l" style="left:42px;top:728px;transform:scaleX(0.89);-webkit-text-stroke:0.25px #000">389512561</div>
<div class="cell r" style="right:1254px;top:728px;transform:scaleX(0.89)">2017.03.16 14:35:07</div>
<div class="cell r" style="right:1143px;top:728px;transform:scaleX(1.0);-webkit-text-stroke:0">sell</div>
<div class="cell r" style="right:1056px;top:728px;transform:scaleX(0.89)">0.03</div>
<div class="cell r" style="right:945px;top:728px;transform:scaleX(1.0);-webkit-text-stroke:0">gbpusd</div>
<div class="cell r" style="right:836px;top:728px;transform:scaleX(0.89)">1.23568</div>
<div class="cell r" style="right:726px;top:728px;transform:scaleX(0.89)">0.00000</div>
<div class="cell r" style="right:616px;top:728px;transform:scaleX(0.89)">0.00000</div>
<div class="cell r" style="right:373px;top:728px;transform:scaleX(0.89)">2017.03.16 15:46:40</div>
<div class="cell r" style="right:263px;top:728px;transform:scaleX(0.89)">1.23464</div>
<div class="cell r" style="right:153px;top:728px;transform:scaleX(0.89)">0.00</div>
<div class="cell r" style="right:22px;top:728px;transform:scaleX(0.89)">181.65</div>
<div class="a" style="left:934px;top:746px;width:109px;height:19px;background:#fbf6fb"></div>
<div class="a" style="left:935px;top:746px;width:107px;height:18px;background:#62ec62"></div>
<svg class="a" style="left:22px;top:747px" width="17" height="17"><path d="M1.6 1.5H9.2L12.4 4.6V14.4H1.6Z" fill="url(#gdoc)" stroke="#4a4a4a" stroke-width="1.05" stroke-linejoin="round"/><path d="M9.4 1.8V4.4H12.2" fill="#fff" stroke="#4a4a4a" stroke-width="0.9"/><circle cx="11.6" cy="13.2" r="3.5" fill="url(#gb)" stroke="#1a64b0" stroke-width="0.7"/></svg>
<div class="t l" style="left:42px;top:748px;transform:scaleX(0.89);-webkit-text-stroke:0.25px #000">389517927</div>
<div class="cell r" style="right:1254px;top:748px;transform:scaleX(0.89)">2017.03.16 14:45:01</div>
<div class="cell r" style="right:1143px;top:748px;transform:scaleX(1.0);-webkit-text-stroke:0">buy</div>
<div class="cell r" style="right:1056px;top:748px;transform:scaleX(0.89)">0.01</div>
<div class="cell r" style="right:945px;top:748px;transform:scaleX(1.0);-webkit-text-stroke:0">gbpusd</div>
<div class="cell r" style="right:836px;top:748px;transform:scaleX(0.89)">1.23578</div>
<div class="cell r" style="right:726px;top:748px;transform:scaleX(0.89)">0.00000</div>
<div class="cell r" style="right:616px;top:748px;transform:scaleX(0.89)">1.23608</div>
<div class="cell r" style="right:373px;top:748px;transform:scaleX(0.89)">2017.03.16 14:58:23</div>
<div class="cell r" style="right:263px;top:748px;transform:scaleX(0.89)">1.23608</div>
<div class="cell r" style="right:153px;top:748px;transform:scaleX(0.89)">0.00</div>
<div class="cell r" style="right:22px;top:748px;transform:scaleX(0.89)">17.35</div>
<div class="a" style="left:934px;top:766px;width:109px;height:19px;background:#fbf6fb"></div>
<div class="a" style="left:935px;top:766px;width:107px;height:18px;background:#62ec62"></div>
<svg class="a" style="left:22px;top:767px" width="17" height="17"><path d="M1.6 1.5H9.2L12.4 4.6V14.4H1.6Z" fill="url(#gdoc)" stroke="#4a4a4a" stroke-width="1.05" stroke-linejoin="round"/><path d="M9.4 1.8V4.4H12.2" fill="#fff" stroke="#4a4a4a" stroke-width="0.9"/><circle cx="11.6" cy="13.2" r="3.5" fill="url(#gs)" stroke="#b83208" stroke-width="0.7"/></svg>
<div class="t l" style="left:42px;top:768px;transform:scaleX(0.89);-webkit-text-stroke:0.25px #000">389517951</div>
<div class="cell r" style="right:1254px;top:768px;transform:scaleX(0.89)">2017.03.16 14:45:01</div>
<div class="cell r" style="right:1143px;top:768px;transform:scaleX(1.0);-webkit-text-stroke:0">sell</div>
<div class="cell r" style="right:1056px;top:768px;transform:scaleX(0.89)">0.02</div>
<div class="cell r" style="right:945px;top:768px;transform:scaleX(1.0);-webkit-text-stroke:0">usdjpy</div>
<div class="cell r" style="right:836px;top:768px;transform:scaleX(0.89)">113.359</div>
<div class="cell r" style="right:726px;top:768px;transform:scaleX(0.89)">0.000</div>
<div class="cell r" style="right:616px;top:768px;transform:scaleX(0.89)">113.311</div>
<div class="cell r" style="right:373px;top:768px;transform:scaleX(0.89)">2017.03.16 14:52:34</div>
<div class="cell r" style="right:263px;top:768px;transform:scaleX(0.89)">113.311</div>
<div class="cell r" style="right:153px;top:768px;transform:scaleX(0.89)">0.00</div>
<div class="cell r" style="right:22px;top:768px;transform:scaleX(0.89)">49.21</div>
<div class="a" style="left:934px;top:786px;width:109px;height:19px;background:#fbf6fb"></div>
<div class="a" style="left:935px;top:786px;width:107px;height:18px;background:#62ec62"></div>
<svg class="a" style="left:22px;top:787px" width="17" height="17"><path d="M1.6 1.5H9.2L12.4 4.6V14.4H1.6Z" fill="url(#gdoc)" stroke="#4a4a4a" stroke-width="1.05" stroke-linejoin="round"/><path d="M9.4 1.8V4.4H12.2" fill="#fff" stroke="#4a4a4a" stroke-width="0.9"/><circle cx="11.6" cy="13.2" r="3.5" fill="url(#gs)" stroke="#b83208" stroke-width="0.7"/></svg>
<div class="t l" style="left:42px;top:788px;transform:scaleX(0.89);-webkit-text-stroke:0.25px #000">389517977</div>
<div class="cell r" style="right:1254px;top:788px;transform:scaleX(0.89)">2017.03.16 14:45:02</div>
<div class="cell r" style="right:1143px;top:788px;transform:scaleX(1.0);-webkit-text-stroke:0">sell</div>
<div class="cell r" style="right:1056px;top:788px;transform:scaleX(0.89)">0.02</div>
<div class="cell r" style="right:945px;top:788px;transform:scaleX(1.0);-webkit-text-stroke:0">eurgbp</div>
<div class="cell r" style="right:836px;top:788px;transform:scaleX(0.89)">0.86813</div>
<div class="cell r" style="right:726px;top:788px;transform:scaleX(0.89)">0.00000</div>
<div class="cell r" style="right:616px;top:788px;transform:scaleX(0.89)">0.86759</div>
<div class="cell r" style="right:373px;top:788px;transform:scaleX(0.89)">2017.03.16 15:05:36</div>
<div class="cell r" style="right:263px;top:788px;transform:scaleX(0.89)">0.86759</div>
<div class="cell r" style="right:153px;top:788px;transform:scaleX(0.89)">0.00</div>
<div class="cell r" style="right:22px;top:788px;transform:scaleX(0.89)">77.63</div>
<div class="a" style="left:934px;top:806px;width:109px;height:19px;background:#fbf6fb"></div>
<div class="a" style="left:935px;top:806px;width:107px;height:18px;background:#62ec62"></div>
<svg class="a" style="left:22px;top:807px" width="17" height="17"><path d="M1.6 1.5H9.2L12.4 4.6V14.4H1.6Z" fill="url(#gdoc)" stroke="#4a4a4a" stroke-width="1.05" stroke-linejoin="round"/><path d="M9.4 1.8V4.4H12.2" fill="#fff" stroke="#4a4a4a" stroke-width="0.9"/><circle cx="11.6" cy="13.2" r="3.5" fill="url(#gb)" stroke="#1a64b0" stroke-width="0.7"/></svg>
<div class="t l" style="left:42px;top:808px;transform:scaleX(0.89);-webkit-text-stroke:0.25px #000">389518055</div>
<div class="cell r" style="right:1254px;top:808px;transform:scaleX(0.89)">2017.03.16 14:45:07</div>
<div class="cell r" style="right:1143px;top:808px;transform:scaleX(1.0);-webkit-text-stroke:0">buy</div>
<div class="cell r" style="right:1056px;top:808px;transform:scaleX(0.89)">0.01</div>
<div class="cell r" style="right:945px;top:808px;transform:scaleX(1.0);-webkit-text-stroke:0">eurgbp</div>
<div class="cell r" style="right:836px;top:808px;transform:scaleX(0.89)">0.86827</div>
<div class="cell r" style="right:726px;top:808px;transform:scaleX(0.89)">0.00000</div>
<div class="cell r" style="right:616px;top:808px;transform:scaleX(0.89)">0.86857</div>
<div class="cell r" style="right:373px;top:808px;transform:scaleX(0.89)">2017.03.16 14:49:27</div>
<div class="cell r" style="right:263px;top:808px;transform:scaleX(0.89)">0.86857</div>
<div class="cell r" style="right:153px;top:808px;transform:scaleX(0.89)">0.00</div>
<div class="cell r" style="right:22px;top:808px;transform:scaleX(0.89)">21.47</div>
<div class="a" style="left:934px;top:826px;width:109px;height:19px;background:#fbf6fb"></div>
<div class="a" style="left:935px;top:826px;width:107px;height:18px;background:#62ec62"></div>
<svg class="a" style="left:22px;top:827px" width="17" height="17"><path d="M1.6 1.5H9.2L12.4 4.6V14.4H1.6Z" fill="url(#gdoc)" stroke="#4a4a4a" stroke-width="1.05" stroke-linejoin="round"/><path d="M9.4 1.8V4.4H12.2" fill="#fff" stroke="#4a4a4a" stroke-width="0.9"/><circle cx="11.6" cy="13.2" r="3.5" fill="url(#gs)" stroke="#b83208" stroke-width="0.7"/></svg>
<div class="t l" style="left:42px;top:828px;transform:scaleX(0.89);-webkit-text-stroke:0.25px #000">389526034</div>
<div class="cell r" style="right:1254px;top:828px;transform:scaleX(0.89)">2017.03.16 15:00:05</div>
<div class="cell r" style="right:1143px;top:828px;transform:scaleX(1.0);-webkit-text-stroke:0">sell</div>
<div class="cell r" style="right:1056px;top:828px;transform:scaleX(0.89)">0.01</div>
<div class="cell r" style="right:945px;top:828px;transform:scaleX(1.0);-webkit-text-stroke:0">usdjpy</div>
<div class="cell r" style="right:836px;top:828px;transform:scaleX(0.89)">113.308</div>
<div class="cell r" style="right:726px;top:828px;transform:scaleX(0.89)">0.000</div>
<div class="cell r" style="right:616px;top:828px;transform:scaleX(0.89)">113.278</div>
<div class="cell r" style="right:373px;top:828px;transform:scaleX(0.89)">2017.03.16 15:20:33</div>
<div class="cell r" style="right:263px;top:828px;transform:scaleX(0.89)">113.278</div>
<div class="cell r" style="right:153px;top:828px;transform:scaleX(0.89)">0.00</div>
<div class="cell r" style="right:22px;top:828px;transform:scaleX(0.89)">15.38</div>
<div class="a" style="left:934px;top:846px;width:109px;height:19px;background:#fbf6fb"></div>
<div class="a" style="left:935px;top:846px;width:107px;height:18px;background:#62ec62"></div>
<svg class="a" style="left:22px;top:847px" width="17" height="17"><path d="M1.6 1.5H9.2L12.4 4.6V14.4H1.6Z" fill="url(#gdoc)" stroke="#4a4a4a" stroke-width="1.05" stroke-linejoin="round"/><path d="M9.4 1.8V4.4H12.2" fill="#fff" stroke="#4a4a4a" stroke-width="0.9"/><circle cx="11.6" cy="13.2" r="3.5" fill="url(#gb)" stroke="#1a64b0" stroke-width="0.7"/></svg>
<div class="t l" style="left:42px;top:848px;transform:scaleX(0.89);-webkit-text-stroke:0.25px #000">389526359</div>
<div class="cell r" style="right:1254px;top:848px;transform:scaleX(0.89)">2017.03.16 15:00:17</div>
<div class="cell r" style="right:1143px;top:848px;transform:scaleX(1.0);-webkit-text-stroke:0">buy</div>
<div class="cell r" style="right:1056px;top:848px;transform:scaleX(0.89)">0.01</div>
<div class="cell r" style="right:945px;top:848px;transform:scaleX(1.0);-webkit-text-stroke:0">gbpusd</div>
<div class="cell r" style="right:836px;top:848px;transform:scaleX(0.89)">1.23704</div>
<div class="cell r" style="right:726px;top:848px;transform:scaleX(0.89)">0.00000</div>
<div class="cell r" style="right:616px;top:848px;transform:scaleX(0.89)">1.23639</div>
<div class="cell r" style="right:373px;top:848px;transform:scaleX(0.89)">2017.03.16 15:27:04</div>
<div class="cell r" style="right:263px;top:848px;transform:scaleX(0.89)">1.23639</div>
<div class="cell r" style="right:153px;top:848px;transform:scaleX(0.89)">0.00</div>
<div class="cell r" style="right:22px;top:848px;transform:scaleX(0.89)">-37.62</div>
<div class="a" style="left:934px;top:866px;width:109px;height:19px;background:#fbf6fb"></div>
<div class="a" style="left:935px;top:866px;width:107px;height:18px;background:#62ec62"></div>
<svg class="a" style="left:22px;top:867px" width="17" height="17"><path d="M1.6 1.5H9.2L12.4 4.6V14.4H1.6Z" fill="url(#gdoc)" stroke="#4a4a4a" stroke-width="1.05" stroke-linejoin="round"/><path d="M9.4 1.8V4.4H12.2" fill="#fff" stroke="#4a4a4a" stroke-width="0.9"/><circle cx="11.6" cy="13.2" r="3.5" fill="url(#gs)" stroke="#b83208" stroke-width="0.7"/></svg>
<div class="t l" style="left:42px;top:868px;transform:scaleX(0.89);-webkit-text-stroke:0.25px #000">389533413</div>
<div class="cell r" style="right:1254px;top:868px;transform:scaleX(0.89)">2017.03.16 15:15:02</div>
<div class="cell r" style="right:1143px;top:868px;transform:scaleX(1.0);-webkit-text-stroke:0">sell</div>
<div class="cell r" style="right:1056px;top:868px;transform:scaleX(0.89)">0.01</div>
<div class="cell r" style="right:945px;top:868px;transform:scaleX(1.0);-webkit-text-stroke:0">usdjpy</div>
<div class="cell r" style="right:836px;top:868px;transform:scaleX(0.89)">113.305</div>
<div class="cell r" style="right:726px;top:868px;transform:scaleX(0.89)">0.000</div>
<div class="cell r" style="right:616px;top:868px;transform:scaleX(0.89)">113.275</div>
<div class="cell r" style="right:373px;top:868px;transform:scaleX(0.89)">2017.03.16 15:20:43</div>
<div class="cell r" style="right:263px;top:868px;transform:scaleX(0.89)">113.275</div>
<div class="cell r" style="right:153px;top:868px;transform:scaleX(0.89)">0.00</div>
<div class="cell r" style="right:22px;top:868px;transform:scaleX(0.89)">15.38</div>
<div class="a" style="left:934px;top:886px;width:109px;height:19px;background:#fbf6fb"></div>
<div class="a" style="left:935px;top:886px;width:107px;height:18px;background:#62ec62"></div>
<svg class="a" style="left:22px;top:887px" width="17" height="17"><path d="M1.6 1.5H9.2L12.4 4.6V14.4H1.6Z" fill="url(#gdoc)" stroke="#4a4a4a" stroke-width="1.05" stroke-linejoin="round"/><path d="M9.4 1.8V4.4H12.2" fill="#fff" stroke="#4a4a4a" stroke-width="0.9"/><circle cx="11.6" cy="13.2" r="3.5" fill="url(#gb)" stroke="#1a64b0" stroke-width="0.7"/></svg>
<div class="t l" style="left:42px;top:888px;transform:scaleX(0.89);-webkit-text-stroke:0.25px #000">389533415</div>
<div class="cell r" style="right:1254px;top:888px;transform:scaleX(0.89)">2017.03.16 15:15:04</div>
<div class="cell r" style="right:1143px;top:888px;transform:scaleX(1.0);-webkit-text-stroke:0">buy</div>
<div class="cell r" style="right:1056px;top:888px;transform:scaleX(0.89)">0.02</div>
<div class="cell r" style="right:945px;top:888px;transform:scaleX(1.0);-webkit-text-stroke:0">gbpusd</div>
<div class="cell r" style="right:836px;top:888px;transform:scaleX(0.89)">1.23561</div>
<div class="cell r" style="right:726px;top:888px;transform:scaleX(0.89)">0.00000</div>
<div class="cell r" style="right:616px;top:888px;transform:scaleX(0.89)">1.23639</div>
<div class="cell r" style="right:373px;top:888px;transform:scaleX(0.89)">2017.03.16 15:27:04</div>
<div class="cell r" style="right:263px;top:888px;transform:scaleX(0.89)">1.23639</div>
<div class="cell r" style="right:153px;top:888px;transform:scaleX(0.89)">0.00</div>
<div class="cell r" style="right:22px;top:888px;transform:scaleX(0.89)">90.27</div>
<div class="a" style="left:934px;top:906px;width:109px;height:19px;background:#fbf6fb"></div>
<div class="a" style="left:935px;top:906px;width:107px;height:18px;background:#62ec62"></div>
<svg class="a" style="left:22px;top:907px" width="17" height="17"><path d="M1.6 1.5H9.2L12.4 4.6V14.4H1.6Z" fill="url(#gdoc)" stroke="#4a4a4a" stroke-width="1.05" stroke-linejoin="round"/><path d="M9.4 1.8V4.4H12.2" fill="#fff" stroke="#4a4a4a" stroke-width="0.9"/><circle cx="11.6" cy="13.2" r="3.5" fill="url(#gs)" stroke="#b83208" stroke-width="0.7"/></svg>
<div class="t l" style="left:42px;top:908px;transform:scaleX(0.89);-webkit-text-stroke:0.25px #000">389547843</div>
<div class="cell r" style="right:1254px;top:908px;transform:scaleX(0.89)">2017.03.16 15:45:07</div>
<div class="cell r" style="right:1143px;top:908px;transform:scaleX(1.0);-webkit-text-stroke:0">sell</div>
<div class="cell r" style="right:1056px;top:908px;transform:scaleX(0.89)">0.01</div>
<div class="cell r" style="right:945px;top:908px;transform:scaleX(1.0);-webkit-text-stroke:0">gbpusd</div>
<div class="cell r" style="right:836px;top:908px;transform:scaleX(0.89)">1.23445</div>
<div class="cell r" style="right:726px;top:908px;transform:scaleX(0.89)">0.00000</div>
<div class="cell r" style="right:616px;top:908px;transform:scaleX(0.89)">1.23415</div>
<div class="cell r" style="right:373px;top:908px;transform:scaleX(0.89)">2017.03.16 15:46:03</div>
<div class="cell r" style="right:263px;top:908px;transform:scaleX(0.89)">1.23415</div>
<div class="cell r" style="right:153px;top:908px;transform:scaleX(0.89)">0.00</div>
<div class="cell r" style="right:22px;top:908px;transform:scaleX(0.89)">17.46</div>
<div class="a" style="left:20px;top:925px;width:1618px;height:19px;background:#c8c8c8"></div>
<svg class="a" style="left:26px;top:930px" width="10" height="10"><circle cx="5" cy="5" r="3.5" fill="#d8d8d8" stroke="#8a8a8a" stroke-width="1.2"/></svg>
<div class="t" style="left:41px;top:928px;font-weight:bold">Прибыль: 10&nbsp;214.45</div>
<div class="t" style="left:163px;top:928px;font-weight:bold">Кредит: 0.00</div>
<div class="t" style="left:241px;top:928px;font-weight:bold">Депозит: 200&nbsp;000.00</div>
<div class="t" style="left:364px;top:928px;font-weight:bold">Снятие: 0.00</div>
<div class="cell" style="right:22px;top:928px;font-weight:bold">210&nbsp;214.45</div>
<div class="a" style="left:1638px;top:101px;width:18px;height:843px;background:#e9e9e9;border-left:1px solid #f0f0f0"></div>
<svg class="a" style="left:1643px;top:107px" width="10" height="6"><path d="M0.5 5.5L4.5 1L8.5 5.5Z" fill="#555"/></svg>
<div class="a" style="left:1639px;top:809px;width:15px;height:114px;background:linear-gradient(90deg,#f7f7f7 0%,#ececec 40%,#dcdcdc 65%,#c8c8c8 100%);border:1px solid #8f8f8f;border-radius:2px"></div>
<svg class="a" style="left:1642px;top:860px" width="10" height="10"><path d="M1.5 2.5H8.5M1.5 5.5H8.5M1.5 8.5H8.5" stroke="#5a5a5a" stroke-width="1.1"/></svg>
<svg class="a" style="left:1643px;top:933px" width="10" height="6"><path d="M0.5 0.5L4.5 5L8.5 0.5Z" fill="#555"/></svg>
<div class="a" style="left:19px;top:944px;width:1637px;height:1px;background:#000"></div>
<div class="a" style="left:19px;top:945px;width:1637px;height:1px;background:#fff"></div>
<div class="a" style="left:155px;top:944px;width:102px;height:13px;background:#fff;border-left:1px solid #000;border-right:1px solid #000"></div>
<div class="t" style="left:32px;top:947px;color:#6a6a6a">Торговля</div>
<div class="a" style="left:94px;top:947px;width:1px;height:10px;background:#555"></div>
<div class="t" style="left:104px;top:947px;color:#6a6a6a">Активы</div>
<div class="t" style="left:165px;top:947px;color:#000">История Счета</div>
<div class="t" style="left:267px;top:947px;color:#6a6a6a">Новости</div>
<div class="a" style="left:336px;top:947px;width:1px;height:10px;background:#555"></div>
<div class="t" style="left:346px;top:947px;color:#6a6a6a">Алерты</div>
<div class="a" style="left:398px;top:947px;width:1px;height:10px;background:#555"></div>
<div class="t" style="left:408px;top:947px;color:#6a6a6a">Почта</div>
<div class="a" style="left:459px;top:947px;width:1px;height:10px;background:#555"></div>
<div class="t" style="left:469px;top:947px;color:#6a6a6a">Маркет</div>
<div class="a" style="left:532px;top:947px;width:1px;height:10px;background:#555"></div>
<div class="t" style="left:541px;top:947px;color:#6a6a6a">Сигналы</div>
<div class="a" style="left:601px;top:947px;width:1px;height:10px;background:#555"></div>
<div class="t" style="left:610px;top:947px;color:#6a6a6a">Библиотека</div>
<div class="a" style="left:686px;top:947px;width:1px;height:10px;background:#555"></div>
<div class="t" style="left:696px;top:947px;color:#6a6a6a">Эксперты</div>
<div class="a" style="left:758px;top:947px;width:1px;height:10px;background:#555"></div>
<div class="t" style="left:769px;top:947px;color:#6a6a6a">Журнал</div>
<div class="a" style="left:822px;top:947px;width:1px;height:10px;background:#555"></div>
<div class="t" style="left:316px;top:950px;color:#e00000;font-size:8px;font-weight:bold">99</div>
<div class="t" style="left:443px;top:950px;color:#e00000;font-size:8px;font-weight:bold">2</div>
<div class="t" style="left:512px;top:950px;color:#e00000;font-size:8px;font-weight:bold">57</div>
</body></html>
